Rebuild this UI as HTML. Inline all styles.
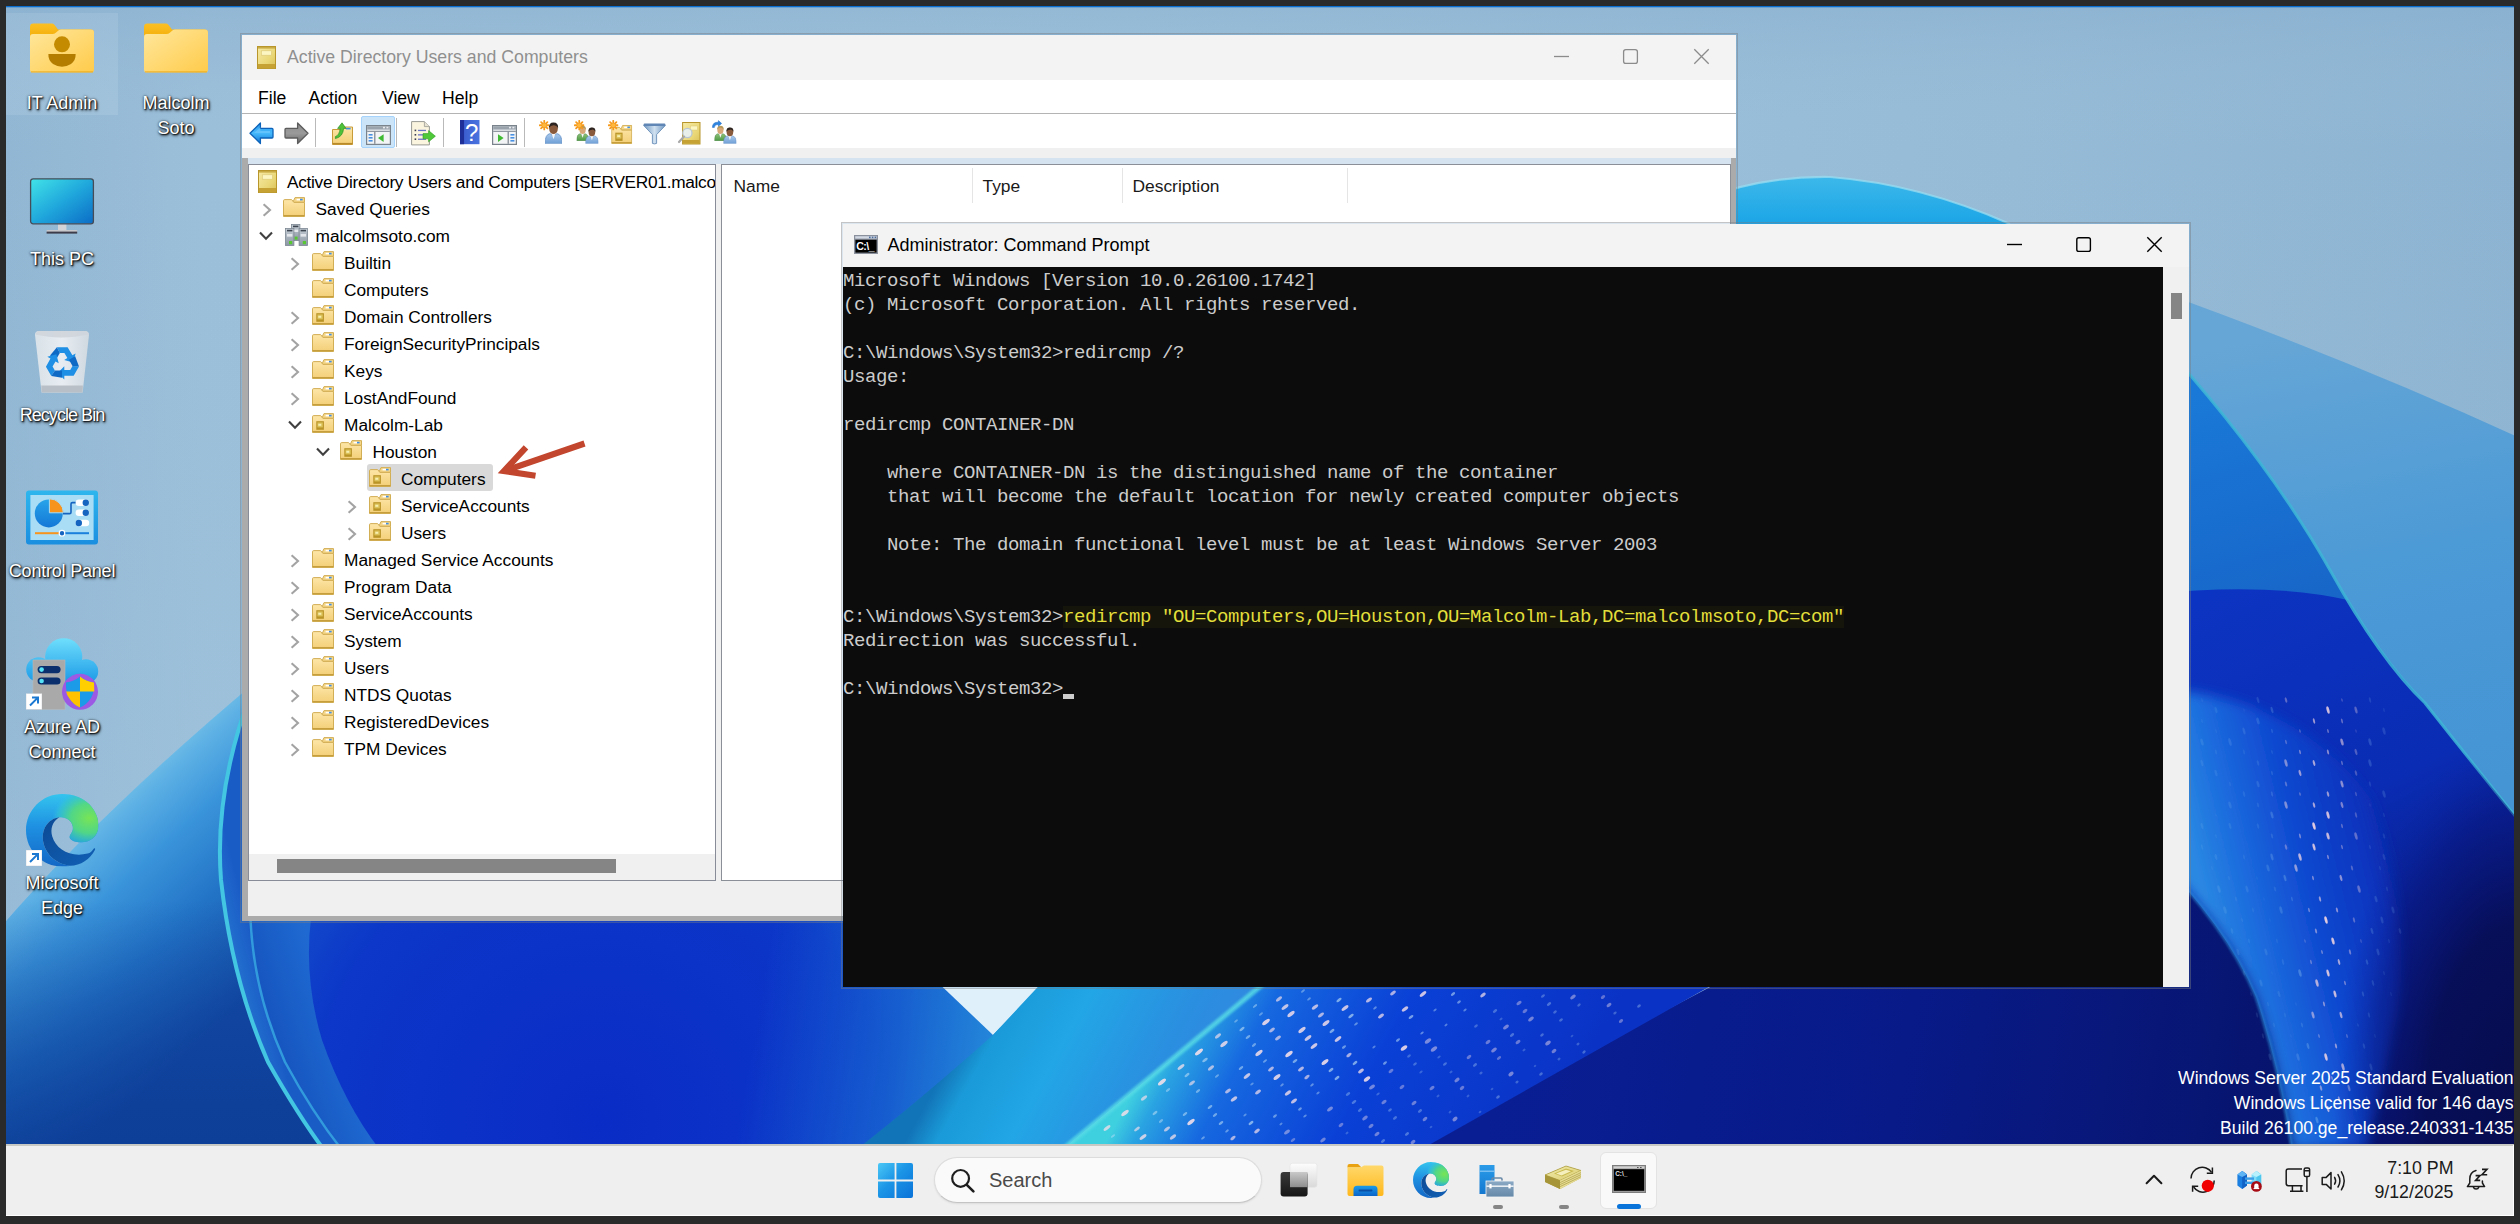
<!DOCTYPE html>
<html lang="en"><head><meta charset="utf-8"><title>Desktop</title>
<style>
*{box-sizing:border-box}
html,body{margin:0;padding:0}
body{width:2520px;height:1224px;overflow:hidden;background:#2a2a2a;position:relative;font-family:"Liberation Sans",sans-serif;font-size:17.5px;color:#000}
#scr{position:absolute;left:0;top:0;width:2520px;height:1224px;overflow:hidden}
.fr{position:absolute;background:#2a2a2a;z-index:50}
.a{position:absolute}
svg{display:block;overflow:visible}
/* desktop icons */
.dl{position:absolute;width:130px;text-align:center;color:#fff;font-size:18px;line-height:25px;text-shadow:1px 1px 1.5px rgba(0,0,0,.95),0 0 2.5px rgba(0,0,0,.75),1px 2px 3px rgba(0,0,0,.55)}
/* windows */
.tx{position:absolute;white-space:pre;line-height:20px}
#con .y{color:#e2de3a;background:#15150b}

</style></head>
<body>
<div id="scr">
<svg width="0" height="0" style="position:absolute">
<defs>
<linearGradient id="gFold" x1="0" y1="0" x2="0" y2="1"><stop offset="0" stop-color="#fde6a8"/><stop offset="1" stop-color="#f3cf77"/></linearGradient>
<linearGradient id="gGold" x1="0" y1="0" x2="1" y2="1"><stop offset="0" stop-color="#f6eaa6"/><stop offset=".6" stop-color="#ead878"/><stop offset="1" stop-color="#d8bf55"/></linearGradient>
<linearGradient id="gSrv" x1="0" y1="0" x2="0" y2="1"><stop offset="0" stop-color="#c4ccd4"/><stop offset="1" stop-color="#8b97a4"/></linearGradient>
<linearGradient id="gBack" x1="0" y1="0" x2="0" y2="1"><stop offset="0" stop-color="#2f9bee"/><stop offset=".5" stop-color="#46b9fb"/><stop offset="1" stop-color="#0f74d6"/></linearGradient>
<linearGradient id="gFwd" x1="0" y1="0" x2="0" y2="1"><stop offset="0" stop-color="#8c8c8c"/><stop offset=".5" stop-color="#9a9a9a"/><stop offset="1" stop-color="#6a6a6a"/></linearGradient>
<linearGradient id="gHelp" x1="0" y1="0" x2="1" y2="0"><stop offset="0" stop-color="#2338a8"/><stop offset=".25" stop-color="#3c5fd0"/><stop offset="1" stop-color="#4a74e0"/></linearGradient>
<linearGradient id="gFun" x1="0" y1="0" x2="1" y2="0"><stop offset="0" stop-color="#6f97c2"/><stop offset=".5" stop-color="#cfe0f0"/><stop offset="1" stop-color="#6f97c2"/></linearGradient>
<linearGradient id="gBody" x1="0" y1="0" x2="0" y2="1"><stop offset="0" stop-color="#a9c9ec"/><stop offset="1" stop-color="#6f9fd6"/></linearGradient>
<linearGradient id="gBodyG" x1="0" y1="0" x2="0" y2="1"><stop offset="0" stop-color="#8fc27a"/><stop offset="1" stop-color="#4f9a45"/></linearGradient>
<!-- plain folder 22x20 -->
<symbol id="iFolder" viewBox="0 0 22 20">
<path d="M.5 3.8Q.5 2.6 1.7 2.6H8.6L11 5.4H21.5V19.5H.5Z" fill="url(#gFold)" stroke="#d2ae55" stroke-width="1"/>
<path d="M10.2 4.6L12 .6H21.5V5.2H11Z" fill="#f6d88a" stroke="#d2ae55" stroke-width="1"/>
<rect x="13.6" y="1.8" width="3.4" height="1.6" fill="#fff"/><rect x="17" y="1.8" width="2.6" height="1.6" fill="#3f8fe8"/>
<path d="M.5 18.6H21.5" stroke="#c79e3c" stroke-width="1.2"/>
</symbol>
<!-- OU folder -->
<symbol id="iOU" viewBox="0 0 22 20">
<use href="#iFolder"/>
<rect x="4.3" y="8.2" width="7.6" height="8.6" fill="#b99326"/>
<rect x="5.4" y="9.4" width="5.4" height="5" fill="#dcc25a"/>
<rect x="6.3" y="10.8" width="3" height="2" fill="#f6efb0"/>
</symbol>
<!-- AD root book 19x23 -->
<symbol id="iAD" viewBox="0 0 19 23">
<rect x=".5" y=".5" width="18" height="22" fill="url(#gGold)" stroke="#b8962c" stroke-width="1"/>
<rect x="1" y="18" width="17" height="4.5" fill="#c5a233"/>
<rect x="1" y="1" width="17" height="1.6" fill="#c9ab45"/>
<rect x="4.4" y="4.8" width="10" height="4.4" fill="#fbf6c2" stroke="#dcc877" stroke-width=".6"/>
</symbol>
<!-- domain servers 23x22 -->
<symbol id="iDom" viewBox="0 0 23 22">
<rect x="6.5" y=".5" width="8.4" height="16" fill="url(#gSrv)" stroke="#7c8792" stroke-width=".8"/>
<rect x="8" y="1.6" width="5.4" height="1.6" fill="#3d4650"/><rect x="8" y="5.6" width="5.4" height="2.4" fill="#e4e8ec"/><rect x="9.6" y="12.6" width="3" height="3" fill="#58c832"/>
<rect x=".5" y="4.5" width="8.4" height="17" fill="url(#gSrv)" stroke="#7c8792" stroke-width=".8"/>
<rect x="2" y="5.8" width="5.4" height="1.6" fill="#3d4650"/><rect x="2" y="10" width="5.4" height="2.6" fill="#e4e8ec"/><rect x="4" y="17" width="3.2" height="3.2" fill="#58c832"/>
<rect x="14.1" y="4.5" width="8.4" height="17" fill="url(#gSrv)" stroke="#7c8792" stroke-width=".8"/>
<rect x="15.6" y="5.8" width="5.4" height="1.6" fill="#3d4650"/><rect x="15.6" y="10" width="5.4" height="2.6" fill="#e4e8ec"/><rect x="17.8" y="17" width="3.2" height="3.2" fill="#58c832"/>
</symbol>
<symbol id="chR" viewBox="0 0 10 14"><path d="M1.6 1.2L8 7L1.6 12.8" fill="none" stroke="#a3a3a3" stroke-width="2.1"/></symbol>
<symbol id="chD" viewBox="0 0 14 10"><path d="M1 1.6L7 7.8L13 1.6" fill="none" stroke="#404040" stroke-width="2.1"/></symbol>
<!-- person head+body (w 14 h 18) -->
<symbol id="iMan" viewBox="0 0 14 18">
<path d="M0 18Q0 10.5 4.2 9.8L7 12L9.8 9.8Q14 10.5 14 18Z" fill="url(#gBody)" stroke="#5f8cc4" stroke-width=".6"/>
<path d="M5.6 10.4L7 14.5L8.4 10.4Z" fill="#f4f6fa"/>
<ellipse cx="7" cy="5.6" rx="3.6" ry="4.6" fill="#8a5a3c"/>
<path d="M3.2 5.2Q3 .6 7 .6Q11.2.6 10.8 5.4Q9.6 2.8 7 3Q4.6 3 3.2 5.2Z" fill="#2c2420"/>
</symbol>
<symbol id="iManG" viewBox="0 0 14 18">
<path d="M0 18Q0 10.5 4.2 9.8L7 12L9.8 9.8Q14 10.5 14 18Z" fill="url(#gBodyG)" stroke="#3f7f3a" stroke-width=".6"/>
<path d="M5.6 10.4L7 14.5L8.4 10.4Z" fill="#f4f6fa"/>
<ellipse cx="7" cy="5.6" rx="3.6" ry="4.6" fill="#d9a878"/>
<path d="M3.2 5.2Q3 .6 7 .6Q11.2.6 10.8 5.4Q9.6 2.8 7 3Q4.6 3 3.2 5.2Z" fill="#b89a5a"/>
</symbol>
<symbol id="iStar" viewBox="0 0 10 10"><g stroke="#f59a1c" stroke-width="1.7" stroke-linecap="round"><path d="M5 .8V9.2M.8 5H9.2M2 2L8 8M8 2L2 8"/></g><circle cx="5" cy="5" r="2" fill="#ffb83c"/></symbol>
<linearGradient id="ed1" x1="0" y1="0" x2="0" y2="1"><stop offset="0" stop-color="#34c4ee"/><stop offset=".45" stop-color="#1e90e2"/><stop offset="1" stop-color="#1468c6"/></linearGradient><radialGradient id="ed2" cx=".84" cy=".5" r=".62"><stop offset="0" stop-color="#78e456"/><stop offset=".5" stop-color="#52d884" stop-opacity=".97"/><stop offset=".85" stop-color="#35c6d0" stop-opacity=".6"/><stop offset="1" stop-color="#2fc0ec" stop-opacity="0"/></radialGradient><linearGradient id="ed3" x1="0" y1="0" x2="1" y2="1"><stop offset="0" stop-color="#0c4a94"/><stop offset="1" stop-color="#1160b6"/></linearGradient>
<symbol id="iEdge" viewBox="0 0 36 36">
<path d="M18 0C30 0 36 8.5 36 15.5C36 21 32 24 27.5 24C23.5 24 21 22.5 21.8 20.6C22.6 19 23.6 18.4 23.2 16C22.6 13 19.6 11.2 16.6 11.6C10.6 12.4 7.4 18 8.6 24C9.8 30 15 35 22 35.6C20.6 35.9 19.2 36 18 36C8 36 0 28 0 18C0 8 8 0 18 0Z" fill="url(#ed1)"/>
<path d="M18 0C30 0 36 8.5 36 15.5C36 21 32 24 27.5 24C23.5 24 21 22.5 21.8 20.6C22.6 19 23.6 18.4 23.2 16C22.6 13 19.6 11.2 16.6 11.6C10.6 12.4 7.4 18 8.6 24C4 14 8 6 18 0Z" fill="url(#ed2)"/>
<path d="M8.6 24C7.4 18 10.6 12.4 16.6 11.6C13 13.6 12 17.6 13 21C15 27.6 22 31.6 30.6 29.6C32 29.2 32.6 28.6 33.4 27.4C34 26.6 34.6 27 34.2 27.8C32 32.4 27 35.6 22 35.6C15 35 9.8 30 8.6 24Z" fill="url(#ed3)"/></symbol>
</defs>
</svg>

<svg class="a" style="left:0;top:0" width="2520" height="1224" viewBox="0 0 2520 1224">
<defs>
<linearGradient id="sky" x1="0" y1="0" x2="1" y2="0"><stop offset="0" stop-color="#90b6d3"/><stop offset=".08" stop-color="#9cbfd9"/><stop offset=".45" stop-color="#9fc3dc"/><stop offset=".8" stop-color="#95bbd7"/><stop offset="1" stop-color="#8cb3d1"/></linearGradient>
<linearGradient id="skyv" x1="0" y1="0" x2="0" y2="1"><stop offset="0" stop-color="#88afcf" stop-opacity=".55"/><stop offset=".12" stop-color="#9cc0da" stop-opacity="0"/><stop offset="1" stop-color="#a8c8e0" stop-opacity=".5"/></linearGradient>
<linearGradient id="lp" gradientUnits="userSpaceOnUse" x1="118" y1="780" x2="285" y2="965"><stop offset="0" stop-color="#a6d0ea"/><stop offset=".035" stop-color="#74c0e8"/><stop offset=".12" stop-color="#5cb0e4"/><stop offset=".32" stop-color="#3a94da"/><stop offset=".6" stop-color="#2273c6"/><stop offset="1" stop-color="#134aa4"/></linearGradient>
<linearGradient id="lpd" gradientUnits="userSpaceOnUse" x1="0" y1="900" x2="0" y2="1145"><stop offset="0" stop-color="#0b3a94" stop-opacity="0"/><stop offset="1" stop-color="#0b3a94" stop-opacity=".75"/></linearGradient>
<radialGradient id="deep" gradientUnits="userSpaceOnUse" cx="600" cy="1120" r="480"><stop offset="0" stop-color="#0a2cc6"/><stop offset=".6" stop-color="#0c37c8"/><stop offset=".82" stop-color="#1450cb"/><stop offset="1" stop-color="#2183d7"/></radialGradient>
<linearGradient id="deepr" gradientUnits="userSpaceOnUse" x1="760" y1="1000" x2="990" y2="1040"><stop offset="0" stop-color="#1c74d4" stop-opacity="0"/><stop offset=".6" stop-color="#1c74d4" stop-opacity=".6"/><stop offset="1" stop-color="#2488da" stop-opacity=".95"/></linearGradient>
<linearGradient id="band2" gradientUnits="userSpaceOnUse" x1="250" y1="1010" x2="325" y2="985"><stop offset="0" stop-color="#1450bc"/><stop offset="1" stop-color="#1f6ad2"/></linearGradient>
<linearGradient id="band" gradientUnits="userSpaceOnUse" x1="225" y1="1000" x2="265" y2="990"><stop offset="0" stop-color="#2a80d6"/><stop offset="1" stop-color="#1a5cc6"/></linearGradient>
<linearGradient id="bp" gradientUnits="userSpaceOnUse" x1="950" y1="1060" x2="1150" y2="1170"><stop offset="0" stop-color="#1274b8"/><stop offset=".12" stop-color="#1a9ad8"/><stop offset=".4" stop-color="#22a6e6"/><stop offset=".8" stop-color="#2a8fe0"/><stop offset="1" stop-color="#2f8ae0"/></linearGradient>
<linearGradient id="rib" gradientUnits="userSpaceOnUse" x1="1150" y1="1060" x2="1500" y2="1250"><stop offset="0" stop-color="#3fd0e0"/><stop offset=".06" stop-color="#2aa4e2"/><stop offset=".2" stop-color="#1668e0"/><stop offset=".5" stop-color="#0a40d6"/><stop offset="1" stop-color="#0a32c4"/></linearGradient>
<linearGradient id="navy" gradientUnits="userSpaceOnUse" x1="1500" y1="1000" x2="2300" y2="1145"><stop offset="0" stop-color="#0a1e94"/><stop offset=".5" stop-color="#081a88"/><stop offset="1" stop-color="#07146c"/></linearGradient>
<linearGradient id="p1" gradientUnits="userSpaceOnUse" x1="2300" y1="330" x2="2400" y2="800"><stop offset="0" stop-color="#66a6d6"/><stop offset=".5" stop-color="#4c9ad6"/><stop offset="1" stop-color="#4594d4"/></linearGradient>
<linearGradient id="p2" gradientUnits="userSpaceOnUse" x1="2190" y1="380" x2="2260" y2="620"><stop offset="0" stop-color="#1a7ad8"/><stop offset="1" stop-color="#1766c8"/></linearGradient>
<linearGradient id="p3" gradientUnits="userSpaceOnUse" x1="2190" y1="600" x2="2450" y2="1100"><stop offset="0" stop-color="#0c34c2"/><stop offset=".45" stop-color="#0a2cb4"/><stop offset="1" stop-color="#070f5c"/></linearGradient>
<linearGradient id="rr" gradientUnits="userSpaceOnUse" x1="2205" y1="900" x2="2410" y2="850"><stop offset="0" stop-color="#2a88e2"/><stop offset=".2" stop-color="#1c6cde"/><stop offset=".5" stop-color="#0f48d0"/><stop offset=".8" stop-color="#0b34be"/><stop offset="1" stop-color="#0a2cb4" stop-opacity="0"/></linearGradient>
<radialGradient id="dk" gradientUnits="userSpaceOnUse" cx="2520" cy="1110" r="300" gradientTransform="translate(2520 1110) scale(.62 1.25) translate(-2520 -1110)"><stop offset="0" stop-color="#070c4e"/><stop offset=".5" stop-color="#070e56" stop-opacity=".92"/><stop offset=".8" stop-color="#08147a" stop-opacity=".5"/><stop offset="1" stop-color="#0a22a0" stop-opacity="0"/></radialGradient>
<linearGradient id="arc" gradientUnits="userSpaceOnUse" x1="1800" y1="178" x2="1800" y2="225"><stop offset="0" stop-color="#3cb8ea"/><stop offset="1" stop-color="#1aa4e6"/></linearGradient>
<filter id="b6" x="-50%" y="-50%" width="200%" height="200%"><feGaussianBlur stdDeviation="6"/></filter>
<filter id="b2" x="-50%" y="-50%" width="200%" height="200%"><feGaussianBlur stdDeviation="1.2"/></filter>
<filter id="b14" x="-50%" y="-50%" width="200%" height="200%"><feGaussianBlur stdDeviation="14"/></filter>
</defs>
<rect x="0" y="0" width="2520" height="1224" fill="url(#sky)"/>
<rect x="0" y="0" width="2520" height="1224" fill="url(#skyv)"/>
<path d="M1700 200 Q1760 176 1830 177 Q1920 184 2010 224 L2010 260 L1700 260Z" fill="url(#arc)"/>
<path d="M1700 200 Q1760 176 1830 177 Q1920 184 2010 224" fill="none" stroke="#9adcf0" stroke-width="2.2" opacity=".75"/>
<rect x="0" y="6" width="2520" height="1.300" fill="#0a6ed0"/>
<path d="M2150 288 Q2350 360 2520 438 L2520 900 L2150 900Z" fill="url(#p1)"/>
<path d="M2150 330 Q2265 455 2330 570 Q2380 660 2440 740 L2150 740Z" fill="url(#p2)"/>
<path d="M2150 594 Q2270 582 2348 600 Q2380 655 2425 703 Q2470 760 2520 822 L2520 1150 L2150 1150Z" fill="url(#p3)"/>
<path d="M2150 330 Q2265 455 2330 570 Q2380 660 2425 703 Q2470 760 2520 822" fill="none" stroke="#3fb6d6" stroke-width="3" opacity=".85"/>
<path d="M2150 690 Q2290 690 2372 800 Q2412 900 2398 1010 Q2384 1080 2368 1150 L2292 1150 Q2280 1070 2256 997 Q2226 925 2150 850Z" fill="url(#rr)" filter="url(#b6)"/>
<clipPath id="cp3"><path d="M2150 594 Q2270 582 2348 600 Q2380 655 2425 703 Q2470 760 2520 822 L2520 1150 L2150 1150Z"/></clipPath><rect x="2150" y="600" width="370" height="550" fill="url(#dk)" clip-path="url(#cp3)"/>
<path d="M2150 850 Q2226 925 2256 997 Q2280 1070 2292 1150 L1400 1150 L1712 986 L2150 986Z" fill="url(#navy)"/>
<path d="M2150 850 Q2226 925 2256 997 Q2280 1070 2292 1150" fill="none" stroke="#2a90d8" stroke-width="3" opacity=".6" filter="url(#b2)"/>
<path d="M0 928 Q110 800 300 645 L420 1150 L0 1150Z" fill="url(#lp)"/>
<path d="M0 928 Q110 800 300 645 L420 1150 L0 1150Z" fill="url(#lpd)"/>
<path d="M252 690 Q214 790 221 880 Q232 980 268 1062 Q298 1115 324 1150 L700 1150 L700 680Z" fill="url(#band)"/>
<path d="M250 900 Q250 985 285 1062 Q312 1112 342 1150 L700 1150 L700 900Z" fill="url(#band2)"/>
<path d="M318 880 Q298 960 322 1040 Q345 1105 380 1150 L1000 1150 L1000 880Z" fill="url(#deep)"/>
<path d="M700 880 L1000 880 L1000 1150 L700 1150Z" fill="url(#deepr)"/>
<path d="M252 690 Q214 790 221 880 Q232 980 268 1062 Q298 1115 324 1150" fill="none" stroke="#43c6e2" stroke-width="4"/>
<path d="M250 900 Q250 985 285 1062 Q312 1112 342 1150" fill="none" stroke="#36a6e0" stroke-width="2.500" opacity=".85"/>
<path d="M930 975 L1050 975 L993 1035Z" fill="#dff0fb"/>
<path d="M1049 975 L1274 975 L1062 1150 L856 1150 Q920 1100 993 1035Z" fill="url(#bp)"/>
<path d="M1274 975 L1730 975 L1420 1150 L1062 1150Z" fill="url(#rib)"/>
<path d="M1274 975 L1062 1150" fill="none" stroke="#57dbe6" stroke-width="5" opacity=".8" filter="url(#b2)"/>
<g><ellipse cx="1279" cy="999" rx="3.6" ry="1.5" fill="#f4dfea" opacity="0.67" transform="rotate(-38 1279 999)"/><ellipse cx="1303" cy="991" rx="2.3" ry="1.1" fill="#bfe0f6" opacity="0.43" transform="rotate(-38 1303 991)"/><ellipse cx="1309" cy="999" rx="2.2" ry="1.1" fill="#bfe0f6" opacity="0.42" transform="rotate(-38 1309 999)"/><ellipse cx="1339" cy="1000" rx="3.1" ry="1.4" fill="#bfe0f6" opacity="0.62" transform="rotate(-38 1339 1000)"/><ellipse cx="1369" cy="1000" rx="3.5" ry="1.6" fill="#f4dfea" opacity="0.72" transform="rotate(-38 1369 1000)"/><ellipse cx="1393" cy="993" rx="3.3" ry="1.5" fill="#f4dfea" opacity="0.69" transform="rotate(-38 1393 993)"/><ellipse cx="1423" cy="994" rx="3.9" ry="1.7" fill="#f4dfea" opacity="0.83" transform="rotate(-38 1423 994)"/><ellipse cx="1453" cy="994" rx="2.5" ry="1.3" fill="#bfe0f6" opacity="0.56" transform="rotate(-38 1453 994)"/><ellipse cx="1459" cy="1002" rx="2.2" ry="1.2" fill="#bfe0f6" opacity="0.49" transform="rotate(-38 1459 1002)"/><ellipse cx="1483" cy="995" rx="3.1" ry="1.6" fill="#f4dfea" opacity="0.72" transform="rotate(-38 1483 995)"/><ellipse cx="1519" cy="1003" rx="3.0" ry="1.6" fill="#f4dfea" opacity="0.41" transform="rotate(-38 1519 1003)"/><ellipse cx="1543" cy="996" rx="2.3" ry="1.3" fill="#bfe0f6" opacity="0.31" transform="rotate(-38 1543 996)"/><ellipse cx="1549" cy="1004" rx="2.5" ry="1.4" fill="#bfe0f6" opacity="0.35" transform="rotate(-38 1549 1004)"/><ellipse cx="1573" cy="997" rx="3.1" ry="1.7" fill="#f4dfea" opacity="0.44" transform="rotate(-38 1573 997)"/><ellipse cx="1579" cy="1005" rx="2.0" ry="1.2" fill="#bfe0f6" opacity="0.29" transform="rotate(-38 1579 1005)"/><ellipse cx="1603" cy="997" rx="2.5" ry="1.5" fill="#f4dfea" opacity="0.37" transform="rotate(-38 1603 997)"/><ellipse cx="1609" cy="1005" rx="2.8" ry="1.6" fill="#f4dfea" opacity="0.43" transform="rotate(-38 1609 1005)"/><ellipse cx="1639" cy="1006" rx="2.1" ry="1.4" fill="#bfe0f6" opacity="0.34" transform="rotate(-38 1639 1006)"/><ellipse cx="1255" cy="1006" rx="2.6" ry="1.1" fill="#bfe0f6" opacity="0.48" transform="rotate(-38 1255 1006)"/><ellipse cx="1261" cy="1014" rx="2.3" ry="1.1" fill="#bfe0f6" opacity="0.42" transform="rotate(-38 1261 1014)"/><ellipse cx="1285" cy="1007" rx="4.1" ry="1.7" fill="#f4dfea" opacity="0.78" transform="rotate(-38 1285 1007)"/><ellipse cx="1291" cy="1014" rx="4.3" ry="1.8" fill="#f4dfea" opacity="0.84" transform="rotate(-38 1291 1014)"/><ellipse cx="1315" cy="1007" rx="3.8" ry="1.6" fill="#f4dfea" opacity="0.75" transform="rotate(-38 1315 1007)"/><ellipse cx="1321" cy="1015" rx="3.5" ry="1.5" fill="#f4dfea" opacity="0.69" transform="rotate(-38 1321 1015)"/><ellipse cx="1345" cy="1008" rx="4.1" ry="1.7" fill="#f4dfea" opacity="0.82" transform="rotate(-38 1345 1008)"/><ellipse cx="1351" cy="1016" rx="3.1" ry="1.4" fill="#bfe0f6" opacity="0.64" transform="rotate(-38 1351 1016)"/><ellipse cx="1375" cy="1008" rx="2.1" ry="1.1" fill="#bfe0f6" opacity="0.44" transform="rotate(-38 1375 1008)"/><ellipse cx="1381" cy="1016" rx="3.4" ry="1.6" fill="#f4dfea" opacity="0.73" transform="rotate(-38 1381 1016)"/><ellipse cx="1405" cy="1009" rx="3.8" ry="1.7" fill="#f4dfea" opacity="0.81" transform="rotate(-38 1405 1009)"/><ellipse cx="1411" cy="1017" rx="2.7" ry="1.3" fill="#bfe0f6" opacity="0.60" transform="rotate(-38 1411 1017)"/><ellipse cx="1435" cy="1010" rx="1.9" ry="1.0" fill="#bfe0f6" opacity="0.42" transform="rotate(-38 1435 1010)"/><ellipse cx="1465" cy="1010" rx="1.9" ry="1.1" fill="#bfe0f6" opacity="0.43" transform="rotate(-38 1465 1010)"/><ellipse cx="1495" cy="1011" rx="2.5" ry="1.4" fill="#bfe0f6" opacity="0.33" transform="rotate(-38 1495 1011)"/><ellipse cx="1501" cy="1019" rx="1.8" ry="1.1" fill="#bfe0f6" opacity="0.25" transform="rotate(-38 1501 1019)"/><ellipse cx="1525" cy="1011" rx="2.7" ry="1.5" fill="#f4dfea" opacity="0.38" transform="rotate(-38 1525 1011)"/><ellipse cx="1531" cy="1019" rx="3.2" ry="1.7" fill="#f4dfea" opacity="0.45" transform="rotate(-38 1531 1019)"/><ellipse cx="1555" cy="1012" rx="2.1" ry="1.3" fill="#bfe0f6" opacity="0.30" transform="rotate(-38 1555 1012)"/><ellipse cx="1561" cy="1020" rx="2.2" ry="1.3" fill="#bfe0f6" opacity="0.32" transform="rotate(-38 1561 1020)"/><ellipse cx="1615" cy="1013" rx="1.9" ry="1.2" fill="#bfe0f6" opacity="0.29" transform="rotate(-38 1615 1013)"/><ellipse cx="1621" cy="1021" rx="2.4" ry="1.5" fill="#f4dfea" opacity="0.39" transform="rotate(-38 1621 1021)"/><ellipse cx="1236" cy="1021" rx="2.2" ry="1.0" fill="#bfe0f6" opacity="0.41" transform="rotate(-38 1236 1021)"/><ellipse cx="1242" cy="1029" rx="3.1" ry="1.3" fill="#bfe0f6" opacity="0.59" transform="rotate(-38 1242 1029)"/><ellipse cx="1266" cy="1022" rx="4.6" ry="1.8" fill="#f4dfea" opacity="0.88" transform="rotate(-38 1266 1022)"/><ellipse cx="1272" cy="1030" rx="3.4" ry="1.5" fill="#f4dfea" opacity="0.66" transform="rotate(-38 1272 1030)"/><ellipse cx="1302" cy="1030" rx="4.3" ry="1.8" fill="#f4dfea" opacity="0.85" transform="rotate(-38 1302 1030)"/><ellipse cx="1326" cy="1023" rx="4.1" ry="1.8" fill="#f4dfea" opacity="0.84" transform="rotate(-38 1326 1023)"/><ellipse cx="1332" cy="1031" rx="2.9" ry="1.4" fill="#bfe0f6" opacity="0.60" transform="rotate(-38 1332 1031)"/><ellipse cx="1356" cy="1024" rx="2.2" ry="1.1" fill="#bfe0f6" opacity="0.46" transform="rotate(-38 1356 1024)"/><ellipse cx="1422" cy="1033" rx="2.0" ry="1.1" fill="#bfe0f6" opacity="0.46" transform="rotate(-38 1422 1033)"/><ellipse cx="1446" cy="1025" rx="1.8" ry="1.0" fill="#bfe0f6" opacity="0.42" transform="rotate(-38 1446 1025)"/><ellipse cx="1476" cy="1026" rx="2.2" ry="1.2" fill="#bfe0f6" opacity="0.29" transform="rotate(-38 1476 1026)"/><ellipse cx="1506" cy="1027" rx="3.3" ry="1.7" fill="#f4dfea" opacity="0.46" transform="rotate(-38 1506 1027)"/><ellipse cx="1512" cy="1035" rx="2.5" ry="1.4" fill="#bfe0f6" opacity="0.35" transform="rotate(-38 1512 1035)"/><ellipse cx="1542" cy="1035" rx="2.1" ry="1.3" fill="#bfe0f6" opacity="0.32" transform="rotate(-38 1542 1035)"/><ellipse cx="1572" cy="1036" rx="1.5" ry="1.0" fill="#bfe0f6" opacity="0.23" transform="rotate(-38 1572 1036)"/><ellipse cx="1218" cy="1036" rx="3.6" ry="1.5" fill="#f4dfea" opacity="0.67" transform="rotate(-38 1218 1036)"/><ellipse cx="1224" cy="1044" rx="4.4" ry="1.8" fill="#f4dfea" opacity="0.83" transform="rotate(-38 1224 1044)"/><ellipse cx="1248" cy="1037" rx="2.8" ry="1.2" fill="#bfe0f6" opacity="0.53" transform="rotate(-38 1248 1037)"/><ellipse cx="1254" cy="1045" rx="2.5" ry="1.2" fill="#bfe0f6" opacity="0.49" transform="rotate(-38 1254 1045)"/><ellipse cx="1278" cy="1038" rx="3.4" ry="1.5" fill="#f4dfea" opacity="0.67" transform="rotate(-38 1278 1038)"/><ellipse cx="1308" cy="1038" rx="4.0" ry="1.7" fill="#f4dfea" opacity="0.81" transform="rotate(-38 1308 1038)"/><ellipse cx="1314" cy="1046" rx="4.0" ry="1.7" fill="#f4dfea" opacity="0.83" transform="rotate(-38 1314 1046)"/><ellipse cx="1338" cy="1039" rx="3.9" ry="1.7" fill="#f4dfea" opacity="0.81" transform="rotate(-38 1338 1039)"/><ellipse cx="1344" cy="1047" rx="2.4" ry="1.2" fill="#bfe0f6" opacity="0.52" transform="rotate(-38 1344 1047)"/><ellipse cx="1374" cy="1047" rx="1.9" ry="1.0" fill="#bfe0f6" opacity="0.42" transform="rotate(-38 1374 1047)"/><ellipse cx="1398" cy="1040" rx="2.4" ry="1.2" fill="#bfe0f6" opacity="0.53" transform="rotate(-38 1398 1040)"/><ellipse cx="1404" cy="1048" rx="3.8" ry="1.8" fill="#f4dfea" opacity="0.88" transform="rotate(-38 1404 1048)"/><ellipse cx="1428" cy="1041" rx="3.7" ry="1.8" fill="#f4dfea" opacity="0.48" transform="rotate(-38 1428 1041)"/><ellipse cx="1434" cy="1049" rx="3.7" ry="1.8" fill="#f4dfea" opacity="0.49" transform="rotate(-38 1434 1049)"/><ellipse cx="1488" cy="1042" rx="2.8" ry="1.6" fill="#f4dfea" opacity="0.40" transform="rotate(-38 1488 1042)"/><ellipse cx="1494" cy="1050" rx="3.2" ry="1.7" fill="#f4dfea" opacity="0.46" transform="rotate(-38 1494 1050)"/><ellipse cx="1518" cy="1042" rx="2.8" ry="1.6" fill="#f4dfea" opacity="0.40" transform="rotate(-38 1518 1042)"/><ellipse cx="1524" cy="1050" rx="1.7" ry="1.1" fill="#bfe0f6" opacity="0.25" transform="rotate(-38 1524 1050)"/><ellipse cx="1548" cy="1043" rx="3.1" ry="1.8" fill="#f4dfea" opacity="0.48" transform="rotate(-38 1548 1043)"/><ellipse cx="1554" cy="1051" rx="2.7" ry="1.7" fill="#f4dfea" opacity="0.43" transform="rotate(-38 1554 1051)"/><ellipse cx="1578" cy="1044" rx="1.7" ry="1.2" fill="#bfe0f6" opacity="0.27" transform="rotate(-38 1578 1044)"/><ellipse cx="1584" cy="1052" rx="1.9" ry="1.3" fill="#bfe0f6" opacity="0.32" transform="rotate(-38 1584 1052)"/><ellipse cx="1199" cy="1052" rx="4.8" ry="1.8" fill="#f4dfea" opacity="0.89" transform="rotate(-38 1199 1052)"/><ellipse cx="1205" cy="1060" rx="3.2" ry="1.4" fill="#bfe0f6" opacity="0.60" transform="rotate(-38 1205 1060)"/><ellipse cx="1259" cy="1053" rx="4.3" ry="1.8" fill="#f4dfea" opacity="0.85" transform="rotate(-38 1259 1053)"/><ellipse cx="1265" cy="1061" rx="2.4" ry="1.1" fill="#bfe0f6" opacity="0.48" transform="rotate(-38 1265 1061)"/><ellipse cx="1289" cy="1054" rx="4.4" ry="1.9" fill="#f4dfea" opacity="0.89" transform="rotate(-38 1289 1054)"/><ellipse cx="1295" cy="1061" rx="2.8" ry="1.3" fill="#bfe0f6" opacity="0.58" transform="rotate(-38 1295 1061)"/><ellipse cx="1325" cy="1062" rx="4.1" ry="1.8" fill="#f4dfea" opacity="0.89" transform="rotate(-38 1325 1062)"/><ellipse cx="1349" cy="1055" rx="3.1" ry="1.5" fill="#f4dfea" opacity="0.67" transform="rotate(-38 1349 1055)"/><ellipse cx="1355" cy="1063" rx="2.8" ry="1.4" fill="#bfe0f6" opacity="0.62" transform="rotate(-38 1355 1063)"/><ellipse cx="1385" cy="1063" rx="2.3" ry="1.2" fill="#bfe0f6" opacity="0.53" transform="rotate(-38 1385 1063)"/><ellipse cx="1409" cy="1056" rx="2.2" ry="1.2" fill="#bfe0f6" opacity="0.29" transform="rotate(-38 1409 1056)"/><ellipse cx="1415" cy="1064" rx="2.2" ry="1.2" fill="#bfe0f6" opacity="0.30" transform="rotate(-38 1415 1064)"/><ellipse cx="1439" cy="1057" rx="1.9" ry="1.1" fill="#bfe0f6" opacity="0.26" transform="rotate(-38 1439 1057)"/><ellipse cx="1445" cy="1064" rx="2.3" ry="1.3" fill="#bfe0f6" opacity="0.32" transform="rotate(-38 1445 1064)"/><ellipse cx="1469" cy="1057" rx="2.7" ry="1.5" fill="#f4dfea" opacity="0.39" transform="rotate(-38 1469 1057)"/><ellipse cx="1475" cy="1065" rx="2.3" ry="1.4" fill="#bfe0f6" opacity="0.34" transform="rotate(-38 1475 1065)"/><ellipse cx="1499" cy="1058" rx="2.5" ry="1.4" fill="#f4dfea" opacity="0.36" transform="rotate(-38 1499 1058)"/><ellipse cx="1535" cy="1066" rx="1.4" ry="1.0" fill="#bfe0f6" opacity="0.23" transform="rotate(-38 1535 1066)"/><ellipse cx="1559" cy="1059" rx="1.7" ry="1.2" fill="#bfe0f6" opacity="0.27" transform="rotate(-38 1559 1059)"/><ellipse cx="1181" cy="1067" rx="4.1" ry="1.6" fill="#f4dfea" opacity="0.76" transform="rotate(-38 1181 1067)"/><ellipse cx="1187" cy="1075" rx="3.0" ry="1.3" fill="#bfe0f6" opacity="0.57" transform="rotate(-38 1187 1075)"/><ellipse cx="1211" cy="1068" rx="3.6" ry="1.5" fill="#f4dfea" opacity="0.68" transform="rotate(-38 1211 1068)"/><ellipse cx="1217" cy="1076" rx="2.4" ry="1.1" fill="#bfe0f6" opacity="0.46" transform="rotate(-38 1217 1076)"/><ellipse cx="1241" cy="1068" rx="2.7" ry="1.2" fill="#bfe0f6" opacity="0.53" transform="rotate(-38 1241 1068)"/><ellipse cx="1247" cy="1076" rx="3.9" ry="1.7" fill="#f4dfea" opacity="0.79" transform="rotate(-38 1247 1076)"/><ellipse cx="1271" cy="1069" rx="3.4" ry="1.5" fill="#f4dfea" opacity="0.68" transform="rotate(-38 1271 1069)"/><ellipse cx="1277" cy="1077" rx="4.1" ry="1.8" fill="#f4dfea" opacity="0.86" transform="rotate(-38 1277 1077)"/><ellipse cx="1301" cy="1069" rx="3.4" ry="1.5" fill="#f4dfea" opacity="0.71" transform="rotate(-38 1301 1069)"/><ellipse cx="1307" cy="1077" rx="3.1" ry="1.5" fill="#f4dfea" opacity="0.66" transform="rotate(-38 1307 1077)"/><ellipse cx="1331" cy="1070" rx="2.9" ry="1.4" fill="#bfe0f6" opacity="0.63" transform="rotate(-38 1331 1070)"/><ellipse cx="1337" cy="1078" rx="2.9" ry="1.4" fill="#bfe0f6" opacity="0.64" transform="rotate(-38 1337 1078)"/><ellipse cx="1361" cy="1071" rx="3.3" ry="1.6" fill="#f4dfea" opacity="0.75" transform="rotate(-38 1361 1071)"/><ellipse cx="1367" cy="1079" rx="3.7" ry="1.8" fill="#f4dfea" opacity="0.87" transform="rotate(-38 1367 1079)"/><ellipse cx="1391" cy="1071" rx="2.9" ry="1.5" fill="#f4dfea" opacity="0.38" transform="rotate(-38 1391 1071)"/><ellipse cx="1421" cy="1072" rx="1.9" ry="1.1" fill="#bfe0f6" opacity="0.26" transform="rotate(-38 1421 1072)"/><ellipse cx="1451" cy="1072" rx="1.7" ry="1.1" fill="#bfe0f6" opacity="0.25" transform="rotate(-38 1451 1072)"/><ellipse cx="1457" cy="1080" rx="3.0" ry="1.7" fill="#f4dfea" opacity="0.44" transform="rotate(-38 1457 1080)"/><ellipse cx="1481" cy="1073" rx="1.8" ry="1.2" fill="#bfe0f6" opacity="0.27" transform="rotate(-38 1481 1073)"/><ellipse cx="1511" cy="1074" rx="3.0" ry="1.8" fill="#f4dfea" opacity="0.47" transform="rotate(-38 1511 1074)"/><ellipse cx="1517" cy="1082" rx="1.8" ry="1.2" fill="#bfe0f6" opacity="0.29" transform="rotate(-38 1517 1082)"/><ellipse cx="1541" cy="1074" rx="2.0" ry="1.4" fill="#bfe0f6" opacity="0.33" transform="rotate(-38 1541 1074)"/><ellipse cx="1162" cy="1082" rx="4.8" ry="1.9" fill="#f4dfea" opacity="0.89" transform="rotate(-38 1162 1082)"/><ellipse cx="1168" cy="1090" rx="2.6" ry="1.2" fill="#bfe0f6" opacity="0.48" transform="rotate(-38 1168 1090)"/><ellipse cx="1192" cy="1083" rx="3.5" ry="1.5" fill="#f4dfea" opacity="0.66" transform="rotate(-38 1192 1083)"/><ellipse cx="1198" cy="1091" rx="2.6" ry="1.2" fill="#bfe0f6" opacity="0.50" transform="rotate(-38 1198 1091)"/><ellipse cx="1228" cy="1091" rx="3.4" ry="1.5" fill="#f4dfea" opacity="0.68" transform="rotate(-38 1228 1091)"/><ellipse cx="1252" cy="1084" rx="2.0" ry="1.0" fill="#bfe0f6" opacity="0.41" transform="rotate(-38 1252 1084)"/><ellipse cx="1258" cy="1092" rx="3.4" ry="1.6" fill="#f4dfea" opacity="0.71" transform="rotate(-38 1258 1092)"/><ellipse cx="1282" cy="1085" rx="2.1" ry="1.1" fill="#bfe0f6" opacity="0.44" transform="rotate(-38 1282 1085)"/><ellipse cx="1288" cy="1093" rx="3.7" ry="1.7" fill="#f4dfea" opacity="0.80" transform="rotate(-38 1288 1093)"/><ellipse cx="1312" cy="1085" rx="2.1" ry="1.1" fill="#bfe0f6" opacity="0.46" transform="rotate(-38 1312 1085)"/><ellipse cx="1318" cy="1093" rx="1.9" ry="1.1" fill="#bfe0f6" opacity="0.42" transform="rotate(-38 1318 1093)"/><ellipse cx="1348" cy="1094" rx="2.6" ry="1.4" fill="#bfe0f6" opacity="0.34" transform="rotate(-38 1348 1094)"/><ellipse cx="1372" cy="1087" rx="3.4" ry="1.7" fill="#f4dfea" opacity="0.45" transform="rotate(-38 1372 1087)"/><ellipse cx="1378" cy="1094" rx="2.0" ry="1.1" fill="#bfe0f6" opacity="0.27" transform="rotate(-38 1378 1094)"/><ellipse cx="1402" cy="1087" rx="2.8" ry="1.5" fill="#f4dfea" opacity="0.38" transform="rotate(-38 1402 1087)"/><ellipse cx="1432" cy="1088" rx="2.9" ry="1.6" fill="#f4dfea" opacity="0.41" transform="rotate(-38 1432 1088)"/><ellipse cx="1438" cy="1096" rx="1.7" ry="1.1" fill="#bfe0f6" opacity="0.24" transform="rotate(-38 1438 1096)"/><ellipse cx="1462" cy="1088" rx="2.6" ry="1.6" fill="#f4dfea" opacity="0.40" transform="rotate(-38 1462 1088)"/><ellipse cx="1468" cy="1096" rx="1.6" ry="1.1" fill="#bfe0f6" opacity="0.25" transform="rotate(-38 1468 1096)"/><ellipse cx="1492" cy="1089" rx="1.5" ry="1.1" fill="#bfe0f6" opacity="0.24" transform="rotate(-38 1492 1089)"/><ellipse cx="1498" cy="1097" rx="2.1" ry="1.4" fill="#bfe0f6" opacity="0.35" transform="rotate(-38 1498 1097)"/><ellipse cx="1144" cy="1098" rx="3.7" ry="1.5" fill="#f4dfea" opacity="0.68" transform="rotate(-38 1144 1098)"/><ellipse cx="1210" cy="1107" rx="2.8" ry="1.3" fill="#bfe0f6" opacity="0.56" transform="rotate(-38 1210 1107)"/><ellipse cx="1234" cy="1099" rx="3.8" ry="1.7" fill="#f4dfea" opacity="0.78" transform="rotate(-38 1234 1099)"/><ellipse cx="1294" cy="1101" rx="3.5" ry="1.6" fill="#f4dfea" opacity="0.77" transform="rotate(-38 1294 1101)"/><ellipse cx="1300" cy="1109" rx="2.2" ry="1.2" fill="#bfe0f6" opacity="0.50" transform="rotate(-38 1300 1109)"/><ellipse cx="1330" cy="1109" rx="3.4" ry="1.7" fill="#f4dfea" opacity="0.45" transform="rotate(-38 1330 1109)"/><ellipse cx="1354" cy="1102" rx="2.7" ry="1.4" fill="#bfe0f6" opacity="0.36" transform="rotate(-38 1354 1102)"/><ellipse cx="1360" cy="1110" rx="2.4" ry="1.4" fill="#bfe0f6" opacity="0.33" transform="rotate(-38 1360 1110)"/><ellipse cx="1384" cy="1102" rx="3.0" ry="1.6" fill="#f4dfea" opacity="0.41" transform="rotate(-38 1384 1102)"/><ellipse cx="1390" cy="1110" rx="2.2" ry="1.3" fill="#bfe0f6" opacity="0.32" transform="rotate(-38 1390 1110)"/><ellipse cx="1414" cy="1103" rx="2.9" ry="1.6" fill="#f4dfea" opacity="0.42" transform="rotate(-38 1414 1103)"/><ellipse cx="1420" cy="1111" rx="2.3" ry="1.4" fill="#bfe0f6" opacity="0.34" transform="rotate(-38 1420 1111)"/><ellipse cx="1450" cy="1112" rx="1.6" ry="1.1" fill="#bfe0f6" opacity="0.24" transform="rotate(-38 1450 1112)"/><ellipse cx="1480" cy="1112" rx="1.5" ry="1.1" fill="#bfe0f6" opacity="0.25" transform="rotate(-38 1480 1112)"/><ellipse cx="1125" cy="1113" rx="4.5" ry="1.8" fill="#f4dfea" opacity="0.84" transform="rotate(-38 1125 1113)"/><ellipse cx="1155" cy="1113" rx="2.9" ry="1.3" fill="#bfe0f6" opacity="0.55" transform="rotate(-38 1155 1113)"/><ellipse cx="1161" cy="1121" rx="2.5" ry="1.2" fill="#bfe0f6" opacity="0.48" transform="rotate(-38 1161 1121)"/><ellipse cx="1185" cy="1114" rx="2.7" ry="1.2" fill="#bfe0f6" opacity="0.54" transform="rotate(-38 1185 1114)"/><ellipse cx="1191" cy="1122" rx="4.4" ry="1.8" fill="#f4dfea" opacity="0.89" transform="rotate(-38 1191 1122)"/><ellipse cx="1215" cy="1115" rx="2.6" ry="1.2" fill="#bfe0f6" opacity="0.53" transform="rotate(-38 1215 1115)"/><ellipse cx="1221" cy="1123" rx="2.7" ry="1.3" fill="#bfe0f6" opacity="0.56" transform="rotate(-38 1221 1123)"/><ellipse cx="1245" cy="1115" rx="1.9" ry="1.0" fill="#bfe0f6" opacity="0.41" transform="rotate(-38 1245 1115)"/><ellipse cx="1251" cy="1123" rx="2.9" ry="1.4" fill="#bfe0f6" opacity="0.64" transform="rotate(-38 1251 1123)"/><ellipse cx="1275" cy="1116" rx="2.3" ry="1.2" fill="#bfe0f6" opacity="0.50" transform="rotate(-38 1275 1116)"/><ellipse cx="1281" cy="1124" rx="1.8" ry="1.0" fill="#bfe0f6" opacity="0.41" transform="rotate(-38 1281 1124)"/><ellipse cx="1305" cy="1116" rx="2.0" ry="1.1" fill="#bfe0f6" opacity="0.45" transform="rotate(-38 1305 1116)"/><ellipse cx="1341" cy="1125" rx="2.8" ry="1.5" fill="#f4dfea" opacity="0.39" transform="rotate(-38 1341 1125)"/><ellipse cx="1365" cy="1118" rx="3.1" ry="1.7" fill="#f4dfea" opacity="0.43" transform="rotate(-38 1365 1118)"/><ellipse cx="1371" cy="1126" rx="2.9" ry="1.6" fill="#f4dfea" opacity="0.42" transform="rotate(-38 1371 1126)"/><ellipse cx="1395" cy="1118" rx="2.3" ry="1.4" fill="#bfe0f6" opacity="0.33" transform="rotate(-38 1395 1118)"/><ellipse cx="1425" cy="1119" rx="2.7" ry="1.6" fill="#f4dfea" opacity="0.42" transform="rotate(-38 1425 1119)"/><ellipse cx="1431" cy="1127" rx="1.5" ry="1.1" fill="#bfe0f6" opacity="0.24" transform="rotate(-38 1431 1127)"/><ellipse cx="1455" cy="1119" rx="2.9" ry="1.8" fill="#f4dfea" opacity="0.47" transform="rotate(-38 1455 1119)"/><ellipse cx="1107" cy="1128" rx="4.1" ry="1.6" fill="#f4dfea" opacity="0.77" transform="rotate(-38 1107 1128)"/><ellipse cx="1113" cy="1136" rx="2.5" ry="1.1" fill="#bfe0f6" opacity="0.47" transform="rotate(-38 1113 1136)"/><ellipse cx="1137" cy="1129" rx="3.4" ry="1.4" fill="#f4dfea" opacity="0.65" transform="rotate(-38 1137 1129)"/><ellipse cx="1143" cy="1137" rx="4.1" ry="1.7" fill="#f4dfea" opacity="0.80" transform="rotate(-38 1143 1137)"/><ellipse cx="1167" cy="1129" rx="3.5" ry="1.5" fill="#f4dfea" opacity="0.69" transform="rotate(-38 1167 1129)"/><ellipse cx="1173" cy="1137" rx="3.7" ry="1.6" fill="#f4dfea" opacity="0.74" transform="rotate(-38 1173 1137)"/><ellipse cx="1203" cy="1138" rx="2.2" ry="1.1" fill="#bfe0f6" opacity="0.47" transform="rotate(-38 1203 1138)"/><ellipse cx="1227" cy="1131" rx="2.1" ry="1.1" fill="#bfe0f6" opacity="0.46" transform="rotate(-38 1227 1131)"/><ellipse cx="1233" cy="1138" rx="3.1" ry="1.5" fill="#f4dfea" opacity="0.68" transform="rotate(-38 1233 1138)"/><ellipse cx="1257" cy="1131" rx="3.2" ry="1.6" fill="#f4dfea" opacity="0.71" transform="rotate(-38 1257 1131)"/><ellipse cx="1287" cy="1132" rx="3.4" ry="1.7" fill="#f4dfea" opacity="0.44" transform="rotate(-38 1287 1132)"/><ellipse cx="1293" cy="1140" rx="2.7" ry="1.4" fill="#f4dfea" opacity="0.36" transform="rotate(-38 1293 1140)"/><ellipse cx="1323" cy="1140" rx="3.1" ry="1.6" fill="#f4dfea" opacity="0.43" transform="rotate(-38 1323 1140)"/><ellipse cx="1347" cy="1133" rx="1.7" ry="1.1" fill="#bfe0f6" opacity="0.25" transform="rotate(-38 1347 1133)"/><ellipse cx="1377" cy="1134" rx="2.9" ry="1.6" fill="#f4dfea" opacity="0.43" transform="rotate(-38 1377 1134)"/><ellipse cx="1383" cy="1141" rx="2.4" ry="1.4" fill="#bfe0f6" opacity="0.36" transform="rotate(-38 1383 1141)"/><ellipse cx="1407" cy="1134" rx="2.3" ry="1.4" fill="#bfe0f6" opacity="0.36" transform="rotate(-38 1407 1134)"/><ellipse cx="1413" cy="1142" rx="2.7" ry="1.7" fill="#f4dfea" opacity="0.44" transform="rotate(-38 1413 1142)"/></g>
<g><ellipse cx="2202" cy="700" rx="0.8" ry="2.1" fill="#8fc4f0" opacity="0.09" transform="rotate(-14 2202 700)"/><ellipse cx="2216" cy="710" rx="1.3" ry="3.4" fill="#8fc4f0" opacity="0.15" transform="rotate(-14 2216 710)"/><ellipse cx="2244" cy="710" rx="0.8" ry="1.9" fill="#8fc4f0" opacity="0.08" transform="rotate(-14 2244 710)"/><ellipse cx="2258" cy="700" rx="1.2" ry="3.3" fill="#8fc4f0" opacity="0.17" transform="rotate(-14 2258 700)"/><ellipse cx="2272" cy="710" rx="1.2" ry="3.3" fill="#8fc4f0" opacity="0.24" transform="rotate(-14 2272 710)"/><ellipse cx="2286" cy="700" rx="1.1" ry="2.9" fill="#f6d8e2" opacity="0.35" transform="rotate(-14 2286 700)"/><ellipse cx="2328" cy="710" rx="1.4" ry="3.9" fill="#f6d8e2" opacity="0.84" transform="rotate(-14 2328 710)"/><ellipse cx="2342" cy="700" rx="0.7" ry="1.8" fill="#f6d8e2" opacity="0.25" transform="rotate(-14 2342 700)"/><ellipse cx="2356" cy="710" rx="1.3" ry="3.6" fill="#f6d8e2" opacity="0.33" transform="rotate(-14 2356 710)"/><ellipse cx="2370" cy="700" rx="1.0" ry="2.8" fill="#8fc4f0" opacity="0.16" transform="rotate(-14 2370 700)"/><ellipse cx="2384" cy="710" rx="0.9" ry="2.3" fill="#8fc4f0" opacity="0.10" transform="rotate(-14 2384 710)"/><ellipse cx="2202" cy="721" rx="0.9" ry="2.3" fill="#8fc4f0" opacity="0.09" transform="rotate(-14 2202 721)"/><ellipse cx="2216" cy="731" rx="0.8" ry="2.1" fill="#8fc4f0" opacity="0.09" transform="rotate(-14 2216 731)"/><ellipse cx="2244" cy="731" rx="1.3" ry="3.6" fill="#8fc4f0" opacity="0.17" transform="rotate(-14 2244 731)"/><ellipse cx="2258" cy="721" rx="1.4" ry="3.7" fill="#8fc4f0" opacity="0.20" transform="rotate(-14 2258 721)"/><ellipse cx="2272" cy="731" rx="0.9" ry="2.3" fill="#8fc4f0" opacity="0.16" transform="rotate(-14 2272 731)"/><ellipse cx="2300" cy="731" rx="0.7" ry="1.8" fill="#f6d8e2" opacity="0.31" transform="rotate(-14 2300 731)"/><ellipse cx="2314" cy="721" rx="1.0" ry="2.8" fill="#f6d8e2" opacity="0.62" transform="rotate(-14 2314 721)"/><ellipse cx="2328" cy="731" rx="0.8" ry="2.1" fill="#f6d8e2" opacity="0.41" transform="rotate(-14 2328 731)"/><ellipse cx="2342" cy="721" rx="0.9" ry="2.5" fill="#f6d8e2" opacity="0.36" transform="rotate(-14 2342 721)"/><ellipse cx="2356" cy="731" rx="0.7" ry="1.8" fill="#f6d8e2" opacity="0.15" transform="rotate(-14 2356 731)"/><ellipse cx="2384" cy="731" rx="1.4" ry="3.8" fill="#8fc4f0" opacity="0.18" transform="rotate(-14 2384 731)"/><ellipse cx="2202" cy="742" rx="1.4" ry="3.7" fill="#8fc4f0" opacity="0.17" transform="rotate(-14 2202 742)"/><ellipse cx="2216" cy="752" rx="1.0" ry="2.6" fill="#8fc4f0" opacity="0.11" transform="rotate(-14 2216 752)"/><ellipse cx="2230" cy="742" rx="1.4" ry="4.0" fill="#8fc4f0" opacity="0.18" transform="rotate(-14 2230 742)"/><ellipse cx="2244" cy="752" rx="1.0" ry="2.6" fill="#8fc4f0" opacity="0.11" transform="rotate(-14 2244 752)"/><ellipse cx="2272" cy="752" rx="0.8" ry="2.0" fill="#8fc4f0" opacity="0.14" transform="rotate(-14 2272 752)"/><ellipse cx="2286" cy="742" rx="0.9" ry="2.4" fill="#f6d8e2" opacity="0.28" transform="rotate(-14 2286 742)"/><ellipse cx="2300" cy="752" rx="0.9" ry="2.3" fill="#f6d8e2" opacity="0.42" transform="rotate(-14 2300 752)"/><ellipse cx="2328" cy="752" rx="1.0" ry="2.6" fill="#f6d8e2" opacity="0.53" transform="rotate(-14 2328 752)"/><ellipse cx="2342" cy="742" rx="1.4" ry="3.7" fill="#f6d8e2" opacity="0.56" transform="rotate(-14 2342 742)"/><ellipse cx="2356" cy="752" rx="1.2" ry="3.2" fill="#f6d8e2" opacity="0.29" transform="rotate(-14 2356 752)"/><ellipse cx="2370" cy="742" rx="1.4" ry="3.8" fill="#8fc4f0" opacity="0.23" transform="rotate(-14 2370 742)"/><ellipse cx="2202" cy="763" rx="1.2" ry="3.4" fill="#8fc4f0" opacity="0.15" transform="rotate(-14 2202 763)"/><ellipse cx="2216" cy="773" rx="1.3" ry="3.4" fill="#8fc4f0" opacity="0.15" transform="rotate(-14 2216 773)"/><ellipse cx="2258" cy="763" rx="1.1" ry="2.8" fill="#8fc4f0" opacity="0.15" transform="rotate(-14 2258 763)"/><ellipse cx="2272" cy="773" rx="0.9" ry="2.4" fill="#8fc4f0" opacity="0.18" transform="rotate(-14 2272 773)"/><ellipse cx="2286" cy="763" rx="1.4" ry="3.9" fill="#f6d8e2" opacity="0.49" transform="rotate(-14 2286 763)"/><ellipse cx="2300" cy="773" rx="1.2" ry="3.2" fill="#f6d8e2" opacity="0.60" transform="rotate(-14 2300 773)"/><ellipse cx="2314" cy="763" rx="1.1" ry="3.0" fill="#f6d8e2" opacity="0.68" transform="rotate(-14 2314 763)"/><ellipse cx="2342" cy="763" rx="0.9" ry="2.2" fill="#f6d8e2" opacity="0.32" transform="rotate(-14 2342 763)"/><ellipse cx="2356" cy="773" rx="1.1" ry="2.9" fill="#f6d8e2" opacity="0.26" transform="rotate(-14 2356 773)"/><ellipse cx="2370" cy="763" rx="1.4" ry="3.8" fill="#8fc4f0" opacity="0.22" transform="rotate(-14 2370 763)"/><ellipse cx="2230" cy="784" rx="0.9" ry="2.3" fill="#8fc4f0" opacity="0.10" transform="rotate(-14 2230 784)"/><ellipse cx="2244" cy="794" rx="1.1" ry="3.0" fill="#8fc4f0" opacity="0.14" transform="rotate(-14 2244 794)"/><ellipse cx="2258" cy="784" rx="1.3" ry="3.4" fill="#8fc4f0" opacity="0.18" transform="rotate(-14 2258 784)"/><ellipse cx="2272" cy="794" rx="1.0" ry="2.7" fill="#8fc4f0" opacity="0.20" transform="rotate(-14 2272 794)"/><ellipse cx="2286" cy="784" rx="1.0" ry="2.6" fill="#f6d8e2" opacity="0.31" transform="rotate(-14 2286 784)"/><ellipse cx="2300" cy="794" rx="0.8" ry="1.9" fill="#f6d8e2" opacity="0.33" transform="rotate(-14 2300 794)"/><ellipse cx="2328" cy="794" rx="1.1" ry="2.9" fill="#f6d8e2" opacity="0.60" transform="rotate(-14 2328 794)"/><ellipse cx="2342" cy="784" rx="1.3" ry="3.7" fill="#f6d8e2" opacity="0.55" transform="rotate(-14 2342 784)"/><ellipse cx="2356" cy="794" rx="0.9" ry="2.4" fill="#f6d8e2" opacity="0.21" transform="rotate(-14 2356 794)"/><ellipse cx="2370" cy="784" rx="1.0" ry="2.7" fill="#8fc4f0" opacity="0.15" transform="rotate(-14 2370 784)"/><ellipse cx="2384" cy="794" rx="1.4" ry="3.9" fill="#8fc4f0" opacity="0.19" transform="rotate(-14 2384 794)"/><ellipse cx="2216" cy="815" rx="0.7" ry="1.9" fill="#8fc4f0" opacity="0.08" transform="rotate(-14 2216 815)"/><ellipse cx="2230" cy="805" rx="1.4" ry="3.7" fill="#8fc4f0" opacity="0.17" transform="rotate(-14 2230 805)"/><ellipse cx="2258" cy="805" rx="1.0" ry="2.6" fill="#8fc4f0" opacity="0.14" transform="rotate(-14 2258 805)"/><ellipse cx="2272" cy="815" rx="1.3" ry="3.6" fill="#8fc4f0" opacity="0.27" transform="rotate(-14 2272 815)"/><ellipse cx="2286" cy="805" rx="1.4" ry="3.9" fill="#f6d8e2" opacity="0.49" transform="rotate(-14 2286 805)"/><ellipse cx="2314" cy="805" rx="1.1" ry="2.9" fill="#f6d8e2" opacity="0.66" transform="rotate(-14 2314 805)"/><ellipse cx="2328" cy="815" rx="1.4" ry="3.8" fill="#f6d8e2" opacity="0.82" transform="rotate(-14 2328 815)"/><ellipse cx="2342" cy="805" rx="1.2" ry="3.2" fill="#f6d8e2" opacity="0.48" transform="rotate(-14 2342 805)"/><ellipse cx="2356" cy="815" rx="1.0" ry="2.8" fill="#f6d8e2" opacity="0.25" transform="rotate(-14 2356 815)"/><ellipse cx="2370" cy="805" rx="0.7" ry="1.9" fill="#8fc4f0" opacity="0.10" transform="rotate(-14 2370 805)"/><ellipse cx="2384" cy="815" rx="0.9" ry="2.3" fill="#8fc4f0" opacity="0.10" transform="rotate(-14 2384 815)"/><ellipse cx="2202" cy="826" rx="1.2" ry="3.2" fill="#8fc4f0" opacity="0.14" transform="rotate(-14 2202 826)"/><ellipse cx="2216" cy="836" rx="0.8" ry="2.1" fill="#8fc4f0" opacity="0.09" transform="rotate(-14 2216 836)"/><ellipse cx="2230" cy="826" rx="1.2" ry="3.2" fill="#8fc4f0" opacity="0.14" transform="rotate(-14 2230 826)"/><ellipse cx="2258" cy="826" rx="1.1" ry="2.9" fill="#8fc4f0" opacity="0.15" transform="rotate(-14 2258 826)"/><ellipse cx="2272" cy="836" rx="1.0" ry="2.6" fill="#8fc4f0" opacity="0.19" transform="rotate(-14 2272 836)"/><ellipse cx="2300" cy="836" rx="0.9" ry="2.5" fill="#f6d8e2" opacity="0.44" transform="rotate(-14 2300 836)"/><ellipse cx="2314" cy="826" rx="1.4" ry="3.9" fill="#f6d8e2" opacity="0.90" transform="rotate(-14 2314 826)"/><ellipse cx="2328" cy="836" rx="1.4" ry="3.7" fill="#f6d8e2" opacity="0.79" transform="rotate(-14 2328 836)"/><ellipse cx="2342" cy="826" rx="0.9" ry="2.3" fill="#f6d8e2" opacity="0.33" transform="rotate(-14 2342 826)"/><ellipse cx="2356" cy="836" rx="1.4" ry="3.9" fill="#f6d8e2" opacity="0.36" transform="rotate(-14 2356 836)"/><ellipse cx="2384" cy="836" rx="1.1" ry="2.9" fill="#8fc4f0" opacity="0.13" transform="rotate(-14 2384 836)"/><ellipse cx="2202" cy="847" rx="1.0" ry="2.7" fill="#8fc4f0" opacity="0.12" transform="rotate(-14 2202 847)"/><ellipse cx="2216" cy="857" rx="1.2" ry="3.2" fill="#8fc4f0" opacity="0.14" transform="rotate(-14 2216 857)"/><ellipse cx="2244" cy="857" rx="1.0" ry="2.5" fill="#8fc4f0" opacity="0.11" transform="rotate(-14 2244 857)"/><ellipse cx="2272" cy="857" rx="1.3" ry="3.5" fill="#8fc4f0" opacity="0.27" transform="rotate(-14 2272 857)"/><ellipse cx="2286" cy="847" rx="1.1" ry="2.9" fill="#f6d8e2" opacity="0.35" transform="rotate(-14 2286 847)"/><ellipse cx="2300" cy="857" rx="1.4" ry="3.9" fill="#f6d8e2" opacity="0.75" transform="rotate(-14 2300 857)"/><ellipse cx="2314" cy="847" rx="1.3" ry="3.6" fill="#f6d8e2" opacity="0.82" transform="rotate(-14 2314 847)"/><ellipse cx="2328" cy="857" rx="0.9" ry="2.3" fill="#f6d8e2" opacity="0.45" transform="rotate(-14 2328 857)"/><ellipse cx="2342" cy="847" rx="0.9" ry="2.4" fill="#f6d8e2" opacity="0.35" transform="rotate(-14 2342 847)"/><ellipse cx="2370" cy="847" rx="0.9" ry="2.3" fill="#8fc4f0" opacity="0.13" transform="rotate(-14 2370 847)"/><ellipse cx="2384" cy="857" rx="1.2" ry="3.2" fill="#8fc4f0" opacity="0.15" transform="rotate(-14 2384 857)"/><ellipse cx="2212" cy="868" rx="0.8" ry="2.1" fill="#8fc4f0" opacity="0.09" transform="rotate(-14 2212 868)"/><ellipse cx="2229" cy="878" rx="0.9" ry="2.3" fill="#8fc4f0" opacity="0.10" transform="rotate(-14 2229 878)"/><ellipse cx="2257" cy="878" rx="0.8" ry="1.9" fill="#8fc4f0" opacity="0.08" transform="rotate(-14 2257 878)"/><ellipse cx="2268" cy="868" rx="1.4" ry="3.7" fill="#8fc4f0" opacity="0.21" transform="rotate(-14 2268 868)"/><ellipse cx="2285" cy="878" rx="1.2" ry="3.4" fill="#8fc4f0" opacity="0.31" transform="rotate(-14 2285 878)"/><ellipse cx="2296" cy="868" rx="1.4" ry="3.8" fill="#f6d8e2" opacity="0.57" transform="rotate(-14 2296 868)"/><ellipse cx="2313" cy="878" rx="0.9" ry="2.2" fill="#f6d8e2" opacity="0.45" transform="rotate(-14 2313 878)"/><ellipse cx="2341" cy="878" rx="1.2" ry="3.2" fill="#f6d8e2" opacity="0.55" transform="rotate(-14 2341 878)"/><ellipse cx="2352" cy="868" rx="1.0" ry="2.6" fill="#f6d8e2" opacity="0.29" transform="rotate(-14 2352 868)"/><ellipse cx="2380" cy="868" rx="0.9" ry="2.4" fill="#8fc4f0" opacity="0.11" transform="rotate(-14 2380 868)"/><ellipse cx="2219" cy="889" rx="1.4" ry="3.9" fill="#8fc4f0" opacity="0.18" transform="rotate(-14 2219 889)"/><ellipse cx="2236" cy="899" rx="1.0" ry="2.6" fill="#8fc4f0" opacity="0.11" transform="rotate(-14 2236 899)"/><ellipse cx="2247" cy="889" rx="1.3" ry="3.6" fill="#8fc4f0" opacity="0.16" transform="rotate(-14 2247 889)"/><ellipse cx="2264" cy="899" rx="0.8" ry="1.9" fill="#8fc4f0" opacity="0.08" transform="rotate(-14 2264 899)"/><ellipse cx="2275" cy="889" rx="1.0" ry="2.6" fill="#8fc4f0" opacity="0.15" transform="rotate(-14 2275 889)"/><ellipse cx="2292" cy="899" rx="0.9" ry="2.2" fill="#8fc4f0" opacity="0.21" transform="rotate(-14 2292 899)"/><ellipse cx="2320" cy="899" rx="1.0" ry="2.7" fill="#f6d8e2" opacity="0.59" transform="rotate(-14 2320 899)"/><ellipse cx="2359" cy="889" rx="1.4" ry="3.8" fill="#f6d8e2" opacity="0.36" transform="rotate(-14 2359 889)"/><ellipse cx="2376" cy="899" rx="1.3" ry="3.4" fill="#8fc4f0" opacity="0.19" transform="rotate(-14 2376 899)"/><ellipse cx="2387" cy="889" rx="1.0" ry="2.5" fill="#8fc4f0" opacity="0.11" transform="rotate(-14 2387 889)"/><ellipse cx="2225" cy="910" rx="1.4" ry="3.9" fill="#8fc4f0" opacity="0.18" transform="rotate(-14 2225 910)"/><ellipse cx="2242" cy="920" rx="0.9" ry="2.4" fill="#8fc4f0" opacity="0.10" transform="rotate(-14 2242 920)"/><ellipse cx="2253" cy="910" rx="0.9" ry="2.5" fill="#8fc4f0" opacity="0.11" transform="rotate(-14 2253 910)"/><ellipse cx="2270" cy="920" rx="0.7" ry="1.8" fill="#8fc4f0" opacity="0.08" transform="rotate(-14 2270 920)"/><ellipse cx="2281" cy="910" rx="1.4" ry="3.8" fill="#8fc4f0" opacity="0.24" transform="rotate(-14 2281 910)"/><ellipse cx="2309" cy="910" rx="0.9" ry="2.3" fill="#f6d8e2" opacity="0.39" transform="rotate(-14 2309 910)"/><ellipse cx="2326" cy="920" rx="1.4" ry="3.9" fill="#f6d8e2" opacity="0.90" transform="rotate(-14 2326 920)"/><ellipse cx="2337" cy="910" rx="1.0" ry="2.6" fill="#f6d8e2" opacity="0.53" transform="rotate(-14 2337 910)"/><ellipse cx="2354" cy="920" rx="1.0" ry="2.7" fill="#f6d8e2" opacity="0.33" transform="rotate(-14 2354 920)"/><ellipse cx="2382" cy="920" rx="1.3" ry="3.5" fill="#8fc4f0" opacity="0.18" transform="rotate(-14 2382 920)"/><ellipse cx="2393" cy="910" rx="1.3" ry="3.6" fill="#8fc4f0" opacity="0.16" transform="rotate(-14 2393 910)"/><ellipse cx="2232" cy="931" rx="1.2" ry="3.1" fill="#8fc4f0" opacity="0.14" transform="rotate(-14 2232 931)"/><ellipse cx="2249" cy="941" rx="1.0" ry="2.5" fill="#8fc4f0" opacity="0.11" transform="rotate(-14 2249 941)"/><ellipse cx="2277" cy="941" rx="0.9" ry="2.2" fill="#8fc4f0" opacity="0.10" transform="rotate(-14 2277 941)"/><ellipse cx="2305" cy="941" rx="0.7" ry="1.9" fill="#f6d8e2" opacity="0.22" transform="rotate(-14 2305 941)"/><ellipse cx="2316" cy="931" rx="1.0" ry="2.5" fill="#f6d8e2" opacity="0.47" transform="rotate(-14 2316 931)"/><ellipse cx="2333" cy="941" rx="1.4" ry="3.7" fill="#f6d8e2" opacity="0.86" transform="rotate(-14 2333 941)"/><ellipse cx="2361" cy="941" rx="0.8" ry="2.0" fill="#f6d8e2" opacity="0.19" transform="rotate(-14 2361 941)"/><ellipse cx="2372" cy="931" rx="1.2" ry="3.3" fill="#8fc4f0" opacity="0.21" transform="rotate(-14 2372 931)"/><ellipse cx="2389" cy="941" rx="0.9" ry="2.3" fill="#8fc4f0" opacity="0.10" transform="rotate(-14 2389 941)"/><ellipse cx="2400" cy="931" rx="1.2" ry="3.1" fill="#8fc4f0" opacity="0.14" transform="rotate(-14 2400 931)"/><ellipse cx="2238" cy="952" rx="1.3" ry="3.4" fill="#8fc4f0" opacity="0.15" transform="rotate(-14 2238 952)"/><ellipse cx="2266" cy="952" rx="1.3" ry="3.6" fill="#8fc4f0" opacity="0.17" transform="rotate(-14 2266 952)"/><ellipse cx="2283" cy="962" rx="1.1" ry="3.0" fill="#8fc4f0" opacity="0.15" transform="rotate(-14 2283 962)"/><ellipse cx="2311" cy="962" rx="0.9" ry="2.3" fill="#f6d8e2" opacity="0.33" transform="rotate(-14 2311 962)"/><ellipse cx="2322" cy="952" rx="0.8" ry="2.1" fill="#f6d8e2" opacity="0.42" transform="rotate(-14 2322 952)"/><ellipse cx="2339" cy="962" rx="1.1" ry="3.0" fill="#f6d8e2" opacity="0.65" transform="rotate(-14 2339 962)"/><ellipse cx="2350" cy="952" rx="1.0" ry="2.7" fill="#f6d8e2" opacity="0.41" transform="rotate(-14 2350 952)"/><ellipse cx="2367" cy="962" rx="1.1" ry="2.9" fill="#8fc4f0" opacity="0.21" transform="rotate(-14 2367 962)"/><ellipse cx="2378" cy="952" rx="1.3" ry="3.5" fill="#8fc4f0" opacity="0.19" transform="rotate(-14 2378 952)"/><ellipse cx="2244" cy="973" rx="1.1" ry="2.8" fill="#8fc4f0" opacity="0.12" transform="rotate(-14 2244 973)"/><ellipse cx="2261" cy="983" rx="1.3" ry="3.6" fill="#8fc4f0" opacity="0.16" transform="rotate(-14 2261 983)"/><ellipse cx="2272" cy="973" rx="0.7" ry="1.9" fill="#8fc4f0" opacity="0.08" transform="rotate(-14 2272 973)"/><ellipse cx="2300" cy="973" rx="1.4" ry="3.9" fill="#8fc4f0" opacity="0.36" transform="rotate(-14 2300 973)"/><ellipse cx="2317" cy="983" rx="1.4" ry="3.8" fill="#f6d8e2" opacity="0.71" transform="rotate(-14 2317 983)"/><ellipse cx="2328" cy="973" rx="1.3" ry="3.7" fill="#f6d8e2" opacity="0.85" transform="rotate(-14 2328 973)"/><ellipse cx="2345" cy="983" rx="0.9" ry="2.4" fill="#f6d8e2" opacity="0.40" transform="rotate(-14 2345 983)"/><ellipse cx="2373" cy="983" rx="1.1" ry="3.1" fill="#8fc4f0" opacity="0.17" transform="rotate(-14 2373 983)"/><ellipse cx="2384" cy="973" rx="0.9" ry="2.3" fill="#8fc4f0" opacity="0.10" transform="rotate(-14 2384 973)"/><ellipse cx="2251" cy="994" rx="0.8" ry="2.1" fill="#8fc4f0" opacity="0.09" transform="rotate(-14 2251 994)"/><ellipse cx="2268" cy="1004" rx="0.9" ry="2.4" fill="#8fc4f0" opacity="0.10" transform="rotate(-14 2268 1004)"/><ellipse cx="2279" cy="994" rx="1.2" ry="3.2" fill="#8fc4f0" opacity="0.15" transform="rotate(-14 2279 994)"/><ellipse cx="2296" cy="1004" rx="0.7" ry="1.8" fill="#8fc4f0" opacity="0.10" transform="rotate(-14 2296 1004)"/><ellipse cx="2324" cy="1004" rx="0.9" ry="2.5" fill="#f6d8e2" opacity="0.50" transform="rotate(-14 2324 1004)"/><ellipse cx="2335" cy="994" rx="1.3" ry="3.5" fill="#f6d8e2" opacity="0.80" transform="rotate(-14 2335 994)"/><ellipse cx="2363" cy="994" rx="1.0" ry="2.7" fill="#8fc4f0" opacity="0.20" transform="rotate(-14 2363 994)"/><ellipse cx="2391" cy="994" rx="0.8" ry="2.2" fill="#8fc4f0" opacity="0.09" transform="rotate(-14 2391 994)"/><ellipse cx="2257" cy="1015" rx="1.0" ry="2.7" fill="#8fc4f0" opacity="0.12" transform="rotate(-14 2257 1015)"/><ellipse cx="2274" cy="1025" rx="0.9" ry="2.5" fill="#8fc4f0" opacity="0.11" transform="rotate(-14 2274 1025)"/><ellipse cx="2285" cy="1015" rx="0.9" ry="2.5" fill="#8fc4f0" opacity="0.11" transform="rotate(-14 2285 1015)"/><ellipse cx="2302" cy="1025" rx="1.0" ry="2.6" fill="#8fc4f0" opacity="0.19" transform="rotate(-14 2302 1025)"/><ellipse cx="2313" cy="1015" rx="1.3" ry="3.7" fill="#f6d8e2" opacity="0.53" transform="rotate(-14 2313 1015)"/><ellipse cx="2341" cy="1015" rx="1.2" ry="3.4" fill="#f6d8e2" opacity="0.66" transform="rotate(-14 2341 1015)"/><ellipse cx="2358" cy="1025" rx="0.7" ry="1.8" fill="#8fc4f0" opacity="0.14" transform="rotate(-14 2358 1025)"/><ellipse cx="2369" cy="1015" rx="1.0" ry="2.7" fill="#8fc4f0" opacity="0.15" transform="rotate(-14 2369 1015)"/><ellipse cx="2263" cy="1036" rx="1.0" ry="2.7" fill="#8fc4f0" opacity="0.12" transform="rotate(-14 2263 1036)"/><ellipse cx="2291" cy="1036" rx="0.7" ry="1.8" fill="#8fc4f0" opacity="0.08" transform="rotate(-14 2291 1036)"/><ellipse cx="2308" cy="1046" rx="1.2" ry="3.2" fill="#8fc4f0" opacity="0.30" transform="rotate(-14 2308 1046)"/><ellipse cx="2319" cy="1036" rx="0.8" ry="2.0" fill="#f6d8e2" opacity="0.33" transform="rotate(-14 2319 1036)"/><ellipse cx="2336" cy="1046" rx="1.0" ry="2.6" fill="#f6d8e2" opacity="0.55" transform="rotate(-14 2336 1046)"/><ellipse cx="2347" cy="1036" rx="0.8" ry="2.1" fill="#f6d8e2" opacity="0.28" transform="rotate(-14 2347 1036)"/><ellipse cx="2364" cy="1046" rx="1.1" ry="2.9" fill="#8fc4f0" opacity="0.16" transform="rotate(-14 2364 1046)"/><ellipse cx="2375" cy="1036" rx="0.8" ry="2.0" fill="#8fc4f0" opacity="0.09" transform="rotate(-14 2375 1036)"/><ellipse cx="2270" cy="1057" rx="1.3" ry="3.5" fill="#8fc4f0" opacity="0.16" transform="rotate(-14 2270 1057)"/><ellipse cx="2298" cy="1057" rx="1.4" ry="3.8" fill="#8fc4f0" opacity="0.21" transform="rotate(-14 2298 1057)"/><ellipse cx="2326" cy="1057" rx="1.4" ry="3.8" fill="#f6d8e2" opacity="0.84" transform="rotate(-14 2326 1057)"/><ellipse cx="2343" cy="1067" rx="1.4" ry="3.8" fill="#f6d8e2" opacity="0.64" transform="rotate(-14 2343 1067)"/><ellipse cx="2371" cy="1067" rx="1.3" ry="3.5" fill="#8fc4f0" opacity="0.16" transform="rotate(-14 2371 1067)"/><ellipse cx="2276" cy="1078" rx="1.0" ry="2.7" fill="#8fc4f0" opacity="0.12" transform="rotate(-14 2276 1078)"/><ellipse cx="2304" cy="1078" rx="0.9" ry="2.3" fill="#8fc4f0" opacity="0.13" transform="rotate(-14 2304 1078)"/><ellipse cx="2321" cy="1088" rx="1.1" ry="2.9" fill="#f6d8e2" opacity="0.50" transform="rotate(-14 2321 1088)"/><ellipse cx="2332" cy="1078" rx="0.8" ry="2.1" fill="#f6d8e2" opacity="0.44" transform="rotate(-14 2332 1078)"/><ellipse cx="2349" cy="1088" rx="1.2" ry="3.4" fill="#f6d8e2" opacity="0.34" transform="rotate(-14 2349 1088)"/><ellipse cx="2360" cy="1078" rx="0.7" ry="1.9" fill="#8fc4f0" opacity="0.10" transform="rotate(-14 2360 1078)"/><ellipse cx="2311" cy="1099" rx="1.2" ry="3.1" fill="#8fc4f0" opacity="0.24" transform="rotate(-14 2311 1099)"/><ellipse cx="2328" cy="1109" rx="1.2" ry="3.2" fill="#f6d8e2" opacity="0.69" transform="rotate(-14 2328 1109)"/><ellipse cx="2339" cy="1099" rx="1.0" ry="2.7" fill="#f6d8e2" opacity="0.51" transform="rotate(-14 2339 1099)"/><ellipse cx="2356" cy="1109" rx="1.0" ry="2.7" fill="#8fc4f0" opacity="0.15" transform="rotate(-14 2356 1109)"/><ellipse cx="2367" cy="1099" rx="1.0" ry="2.8" fill="#8fc4f0" opacity="0.12" transform="rotate(-14 2367 1099)"/><ellipse cx="2289" cy="1120" rx="0.7" ry="1.9" fill="#8fc4f0" opacity="0.07" transform="rotate(-14 2289 1120)"/><ellipse cx="2306" cy="1130" rx="1.1" ry="2.9" fill="#8fc4f0" opacity="0.14" transform="rotate(-14 2306 1130)"/><ellipse cx="2317" cy="1120" rx="1.3" ry="3.4" fill="#8fc4f0" opacity="0.38" transform="rotate(-14 2317 1120)"/><ellipse cx="2362" cy="1130" rx="0.8" ry="2.1" fill="#8fc4f0" opacity="0.09" transform="rotate(-14 2362 1130)"/></g>
</svg>
<div class="a" style="left:6px;top:13px;width:112px;height:102px;background:rgba(255,255,255,.1)"></div>
<svg width="0" height="0" style="position:absolute"><defs>
<linearGradient id="dF1" x1="0" y1="0" x2="1" y2="1"><stop offset="0" stop-color="#ffe79c"/><stop offset="1" stop-color="#ffcb4a"/></linearGradient>
<linearGradient id="dF0" x1="0" y1="0" x2="0" y2="1"><stop offset="0" stop-color="#fbbf24"/><stop offset="1" stop-color="#f2a900"/></linearGradient>
<symbol id="dFolder" viewBox="0 0 64 50"><path d="M0 4Q0 .6 3.4 .6H21.6Q23.4.6 24.6 2L28 6.6H60.6Q64 6.600 64 10V20H0Z" fill="url(#dF0)"/><path d="M0 14Q0 11 3 11H22.4Q24.4 11 25.8 9.800L28.400 7.600Q29.600 6.600 31.400 6.600H60.800Q64 6.600 64 9.800V46.400Q64 49.600 60.800 49.600H3.200Q0 49.600 0 46.400Z" fill="url(#dF1)"/><path d="M1 48.900H63" stroke="#eaa512" stroke-width="1.200" opacity=".7"/></symbol>
<symbol id="dShort" viewBox="0 0 16 16"><rect x="0" y="0" width="16" height="16" fill="#fff"/><rect x="0" y="0" width="16" height="16" fill="none" stroke="#d8dde2" stroke-width=".8"/><path d="M4 12L11.600 4.400M6 4H12V10" fill="none" stroke="#1b78d2" stroke-width="2"/></symbol>
</defs></svg>
<svg class="a" style="left:30px;top:23px" width="64" height="50" viewBox="0 0 64 50"><use href="#dFolder"/><circle cx="32" cy="21.300" r="8" fill="#c58b00"/><path d="M18.400 31H45.600Q46 37 41 41Q32 46.500 23 41Q18 37 18.400 31Z" fill="#b47d00"/></svg>
<div class="dl" style="left:-3px;top:91px">IT Admin</div>
<svg class="a" style="left:144px;top:23px" width="64" height="50" viewBox="0 0 64 50"><use href="#dFolder"/></svg>
<div class="dl" style="left:111px;top:91px">Malcolm<br>Soto</div>
<svg class="a" style="left:30px;top:178px" width="64" height="56" viewBox="0 0 64 56"><defs><linearGradient id="pc1" x1="0" y1="0" x2="1" y2="1"><stop offset="0" stop-color="#41e3e8"/><stop offset=".5" stop-color="#20a8dc"/><stop offset="1" stop-color="#0b6cc6"/></linearGradient></defs>
<rect x="28" y="45" width="8.400" height="7.600" fill="#d2d4d8"/><rect x="16.600" y="52" width="30.600" height="2" fill="#c6c8cc"/><rect x="16.600" y="53.600" width="30.600" height="2" fill="#3c3c4a"/>
<rect x=".6" y=".8" width="62.800" height="45" rx="2.600" fill="url(#pc1)" stroke="#474d58" stroke-width="1.300"/></svg>
<div class="dl" style="left:-3px;top:247px">This PC</div>
<svg class="a" style="left:34px;top:330px" width="56" height="64" viewBox="0 0 56 64"><defs><linearGradient id="rb1" x1="0" y1="0" x2="1" y2="0"><stop offset="0" stop-color="#dfe5ea"/><stop offset=".5" stop-color="#eef1f4"/><stop offset="1" stop-color="#d5dbe1"/></linearGradient></defs>
<path d="M1 5Q1 1 5 1H51Q55 1 55 5L48.600 62.600H7.600Z" fill="url(#rb1)" opacity=".92"/><path d="M1.600 4.600Q2 1 5 1H51Q54.400 1 54.600 4.600Q40 7.600 28 7.600Q14 7.600 1.600 4.600Z" fill="#cfd5db" opacity=".9"/>
<path d="M7.200 55.500H48.900L48.600 62.600H7.600Z" fill="#b9bfc6"/>
<g transform="translate(28.400 33.200)"><g id="rbA"><path d="M-5.500 -16H5.200L10 -8L13.200 -9.800L10.800 -.8L1.800 -3.200L5 -5.100L2 -10.200H-2.600Z" fill="#1e8fe4"/><path d="M-5.500 -16L-2.600 -10.200L-6.200 -4L-12.400 -7.600Z" fill="#0f6ac6"/></g><use href="#rbA" transform="rotate(120)"/><use href="#rbA" transform="rotate(240)"/></g></svg>
<div class="dl" style="left:-3px;top:403px;letter-spacing:-.95px">Recycle Bin</div>
<svg class="a" style="left:26px;top:490px" width="72" height="55" viewBox="0 0 72 55"><defs><linearGradient id="cp1" x1="0" y1="0" x2="0" y2="1"><stop offset="0" stop-color="#2eb6ee"/><stop offset="1" stop-color="#1a8ee0"/></linearGradient><linearGradient id="cp2" x1="0" y1="0" x2="0" y2="1"><stop offset="0" stop-color="#28a4ea"/><stop offset="1" stop-color="#1478d6"/></linearGradient></defs>
<rect x="0" y=".6" width="72" height="54" rx="3" fill="url(#cp1)"/><rect x="4.400" y="5" width="63.200" height="45" fill="#a9dcf5"/>
<circle cx="22.800" cy="23.400" r="14" fill="url(#cp2)"/><path d="M23.400 22.800V8.800A14 14 0 0 1 37.400 22.800Z" fill="#f7941c" stroke="#a9dcf5" stroke-width="1"/>
<path d="M37 23.600H43.600Q45 23.600 45 22.200V14Q45 12.600 46.400 12.600H51" fill="none" stroke="#1464c0" stroke-width="1.600"/>
<g><rect x="49.600" y="9.600" width="13.600" height="6.400" rx="3.200" fill="#fff"/><circle cx="59.800" cy="12.800" r="3.200" fill="#1464c0"/><rect x="49.600" y="19.600" width="13.600" height="6.400" rx="3.200" fill="#fff"/><circle cx="59.800" cy="22.800" r="3.200" fill="#1464c0"/><rect x="49.600" y="29.800" width="13.600" height="6.400" rx="3.200" fill="#fff"/><circle cx="52.800" cy="33" r="3.200" fill="#1464c0"/></g>
<path d="M9 43.200H33" stroke="#f7941c" stroke-width="2"/><path d="M39 43.200H63" stroke="#1a80dc" stroke-width="2"/><circle cx="36" cy="43.200" r="2.800" fill="#1464c0" stroke="#fff" stroke-width="1.200"/></svg>
<div class="dl" style="left:-3px;top:559px;letter-spacing:-.2px">Control Panel</div>
<svg class="a" style="left:26px;top:638px" width="73" height="73" viewBox="0 0 73 73"><defs><linearGradient id="az1" gradientUnits="userSpaceOnUse" x1="0" y1="0" x2="0" y2="46"><stop offset="0" stop-color="#6fdffc"/><stop offset="1" stop-color="#1a98e6"/></linearGradient></defs>
<g fill="url(#az1)"><circle cx="37.700" cy="18.800" r="18.600"/><circle cx="12.600" cy="31.600" r="12.400"/><circle cx="60" cy="33.400" r="12.200"/><rect x="12" y="26" width="48" height="19.800"/></g>
<rect x="7" y="22" width="32" height="49.400" fill="#a9a9a9"/><rect x="7" y="22" width="32" height="49.400" fill="none" stroke="#b8b8b8" stroke-width=".6"/>
<rect x="11.600" y="28" width="23" height="7.200" rx="3.600" fill="#0b2f6c"/><circle cx="15.600" cy="31.600" r="2.300" fill="#55e3f8"/><rect x="11.600" y="39.400" width="23" height="7.200" rx="3.600" fill="#0b2f6c"/><circle cx="15.600" cy="43" r="2.300" fill="#55e3f8"/>
<circle cx="54" cy="53.800" r="18" fill="#9b59e4"/>
<path d="M40 44.500Q48 43.600 54 38.500Q60 43.600 68 44.500Q68.500 54 65 60Q61 66.500 54 69.600Q47 66.500 43 60Q39.500 54 40 44.500Z" fill="#1b9be8"/><path d="M54 38.500Q60 43.600 68 44.500L68.300 53.500H54Z" fill="#ffcf00"/><path d="M54 53.500V69.600Q47 66.500 43 60Q40.600 56.500 40.100 53.500Z" fill="#ffc200"/>
<svg x="0" y="55.500" width="16" height="16"><use href="#dShort"/></svg></svg>
<div class="dl" style="left:-3px;top:715px">Azure AD<br>Connect</div>
<svg class="a" style="left:26px;top:793.500px" width="72.500" height="72.500"><use href="#iEdge"/></svg>
<svg class="a" style="left:26px;top:850px" width="16" height="16"><use href="#dShort"/></svg>
<div class="dl" style="left:-3px;top:871px">Microsoft<br>Edge</div>
<div class="a" style="left:240px;top:33px;width:1498px;height:890px;border:1px solid rgba(120,124,128,.45)"></div>
<div class="a" style="left:241px;top:34px;width:1496px;height:888px;border:1px solid rgba(80,130,175,.22)"></div>
<div class="a" id="adw" style="left:242px;top:35px;width:1494px;height:886px;background:#f0f0f0"></div>
<div class="a" style="left:242px;top:35px;width:1494px;height:45px;background:#f3f3f3"></div>
<svg class="a" style="left:257px;top:46px" width="19" height="23"><use href="#iAD"/></svg>
<div class="tx" style="left:287px;top:46px;color:#8f8f8f;font-size:17.7px;line-height:22px">Active Directory Users and Computers</div>
<svg class="a" style="left:1540px;top:34px" width="190" height="46" viewBox="1540 34 190 46"><g fill="none" stroke="#8b8b8b" stroke-width="1.3"><path d="M1554 56.5H1569"/><rect x="1623.6" y="49.6" width="13.8" height="13.8" rx="2.2"/><path d="M1694.3 49.3L1708.7 63.7M1708.7 49.3L1694.3 63.7"/></g></svg>
<div class="a" style="left:242px;top:80px;width:1494px;height:33px;background:#fff"></div>
<div class="tx" style="left:258px;top:87px;font-size:17.6px;line-height:22px">File</div>
<div class="tx" style="left:308.5px;top:87px;font-size:17.6px;line-height:22px">Action</div>
<div class="tx" style="left:382px;top:87px;font-size:17.6px;line-height:22px">View</div>
<div class="tx" style="left:442px;top:87px;font-size:17.6px;line-height:22px">Help</div>
<div class="a" style="left:242px;top:113px;width:1494px;height:1px;background:#b4b4b4"></div>
<div class="a" style="left:242px;top:114px;width:1494px;height:34px;background:#fff"></div>
<div class="a" style="left:242px;top:148px;width:1494px;height:10px;background:#f0f0f0"></div>
<div class="a" style="left:242px;top:158px;width:1494px;height:763px;background:#ababab"></div>
<div class="a" style="left:248px;top:158px;width:1483px;height:758px;background:#f0f0f0"></div>
<div class="a" style="left:248px;top:158px;width:1483px;height:6px;background:#d5e3f1"></div>
<div class="a" style="left:248px;top:164px;width:468px;height:717px;background:#fff;border:1px solid #878c98;overflow:hidden" id="tree">
<svg class="a" style="left:9.0px;top:5px" width="19" height="23"><use href="#iAD"/></svg>
<div class="tx" style="left:38.0px;top:4px;line-height:27px;font-size:17.3px;letter-spacing:-.3px">Active Directory Users and Computers [SERVER01.malcolmsoto.com]</div>
<svg class="a" style="left:34.0px;top:32px" width="22" height="20"><use href="#iFolder"/></svg>
<svg class="a" style="left:12.5px;top:37.5px" width="10" height="14"><use href="#chR"/></svg>
<div class="tx" style="left:66.5px;top:31px;line-height:27px;font-size:17.3px">Saved Queries</div>
<svg class="a" style="left:35.5px;top:58.5px" width="23" height="22"><use href="#iDom"/></svg>
<svg class="a" style="left:10.0px;top:65.5px" width="14" height="10"><use href="#chD"/></svg>
<div class="tx" style="left:66.5px;top:58px;line-height:27px;font-size:17.3px">malcolmsoto.com</div>
<svg class="a" style="left:62.5px;top:86px" width="22" height="20"><use href="#iFolder"/></svg>
<svg class="a" style="left:41.0px;top:91.5px" width="10" height="14"><use href="#chR"/></svg>
<div class="tx" style="left:95.0px;top:85px;line-height:27px;font-size:17.3px">Builtin</div>
<svg class="a" style="left:62.5px;top:113px" width="22" height="20"><use href="#iFolder"/></svg>
<div class="tx" style="left:95.0px;top:112px;line-height:27px;font-size:17.3px">Computers</div>
<svg class="a" style="left:62.5px;top:140px" width="22" height="20"><use href="#iOU"/></svg>
<svg class="a" style="left:41.0px;top:145.5px" width="10" height="14"><use href="#chR"/></svg>
<div class="tx" style="left:95.0px;top:139px;line-height:27px;font-size:17.3px">Domain Controllers</div>
<svg class="a" style="left:62.5px;top:167px" width="22" height="20"><use href="#iFolder"/></svg>
<svg class="a" style="left:41.0px;top:172.5px" width="10" height="14"><use href="#chR"/></svg>
<div class="tx" style="left:95.0px;top:166px;line-height:27px;font-size:17.3px">ForeignSecurityPrincipals</div>
<svg class="a" style="left:62.5px;top:194px" width="22" height="20"><use href="#iFolder"/></svg>
<svg class="a" style="left:41.0px;top:199.5px" width="10" height="14"><use href="#chR"/></svg>
<div class="tx" style="left:95.0px;top:193px;line-height:27px;font-size:17.3px">Keys</div>
<svg class="a" style="left:62.5px;top:221px" width="22" height="20"><use href="#iFolder"/></svg>
<svg class="a" style="left:41.0px;top:226.5px" width="10" height="14"><use href="#chR"/></svg>
<div class="tx" style="left:95.0px;top:220px;line-height:27px;font-size:17.3px">LostAndFound</div>
<svg class="a" style="left:62.5px;top:248px" width="22" height="20"><use href="#iOU"/></svg>
<svg class="a" style="left:38.5px;top:254.5px" width="14" height="10"><use href="#chD"/></svg>
<div class="tx" style="left:95.0px;top:247px;line-height:27px;font-size:17.3px">Malcolm-Lab</div>
<svg class="a" style="left:91.0px;top:275px" width="22" height="20"><use href="#iOU"/></svg>
<svg class="a" style="left:67.0px;top:281.5px" width="14" height="10"><use href="#chD"/></svg>
<div class="tx" style="left:123.5px;top:274px;line-height:27px;font-size:17.3px">Houston</div>
<div class="a" style="left:117.5px;top:299px;width:126.5px;height:27px;background:#d9d9d9;border-radius:3px"></div>
<svg class="a" style="left:119.5px;top:302px" width="22" height="20"><use href="#iOU"/></svg>
<div class="tx" style="left:152.0px;top:301px;line-height:27px;font-size:17.3px">Computers</div>
<svg class="a" style="left:119.5px;top:329px" width="22" height="20"><use href="#iOU"/></svg>
<svg class="a" style="left:98.0px;top:334.5px" width="10" height="14"><use href="#chR"/></svg>
<div class="tx" style="left:152.0px;top:328px;line-height:27px;font-size:17.3px">ServiceAccounts</div>
<svg class="a" style="left:119.5px;top:356px" width="22" height="20"><use href="#iOU"/></svg>
<svg class="a" style="left:98.0px;top:361.5px" width="10" height="14"><use href="#chR"/></svg>
<div class="tx" style="left:152.0px;top:355px;line-height:27px;font-size:17.3px">Users</div>
<svg class="a" style="left:62.5px;top:383px" width="22" height="20"><use href="#iFolder"/></svg>
<svg class="a" style="left:41.0px;top:388.5px" width="10" height="14"><use href="#chR"/></svg>
<div class="tx" style="left:95.0px;top:382px;line-height:27px;font-size:17.3px">Managed Service Accounts</div>
<svg class="a" style="left:62.5px;top:410px" width="22" height="20"><use href="#iFolder"/></svg>
<svg class="a" style="left:41.0px;top:415.5px" width="10" height="14"><use href="#chR"/></svg>
<div class="tx" style="left:95.0px;top:409px;line-height:27px;font-size:17.3px">Program Data</div>
<svg class="a" style="left:62.5px;top:437px" width="22" height="20"><use href="#iOU"/></svg>
<svg class="a" style="left:41.0px;top:442.5px" width="10" height="14"><use href="#chR"/></svg>
<div class="tx" style="left:95.0px;top:436px;line-height:27px;font-size:17.3px">ServiceAccounts</div>
<svg class="a" style="left:62.5px;top:464px" width="22" height="20"><use href="#iFolder"/></svg>
<svg class="a" style="left:41.0px;top:469.5px" width="10" height="14"><use href="#chR"/></svg>
<div class="tx" style="left:95.0px;top:463px;line-height:27px;font-size:17.3px">System</div>
<svg class="a" style="left:62.5px;top:491px" width="22" height="20"><use href="#iFolder"/></svg>
<svg class="a" style="left:41.0px;top:496.5px" width="10" height="14"><use href="#chR"/></svg>
<div class="tx" style="left:95.0px;top:490px;line-height:27px;font-size:17.3px">Users</div>
<svg class="a" style="left:62.5px;top:518px" width="22" height="20"><use href="#iFolder"/></svg>
<svg class="a" style="left:41.0px;top:523.5px" width="10" height="14"><use href="#chR"/></svg>
<div class="tx" style="left:95.0px;top:517px;line-height:27px;font-size:17.3px">NTDS Quotas</div>
<svg class="a" style="left:62.5px;top:545px" width="22" height="20"><use href="#iFolder"/></svg>
<svg class="a" style="left:41.0px;top:550.5px" width="10" height="14"><use href="#chR"/></svg>
<div class="tx" style="left:95.0px;top:544px;line-height:27px;font-size:17.3px">RegisteredDevices</div>
<svg class="a" style="left:62.5px;top:572px" width="22" height="20"><use href="#iFolder"/></svg>
<svg class="a" style="left:41.0px;top:577.5px" width="10" height="14"><use href="#chR"/></svg>
<div class="tx" style="left:95.0px;top:571px;line-height:27px;font-size:17.3px">TPM Devices</div>
<div class="a" style="left:0;top:689px;width:466px;height:27px;background:#f0f0f0"></div>
<div class="a" style="left:27.5px;top:694px;width:339.5px;height:14px;background:#858585"></div>
</div>
<div class="a" style="left:721px;top:164px;width:1010px;height:717px;background:#fff;border:1px solid #8a8f98"></div>
<div class="a" style="left:972px;top:168px;width:1px;height:35px;background:#e5e5e5"></div>
<div class="a" style="left:1122px;top:168px;width:1px;height:35px;background:#e5e5e5"></div>
<div class="a" style="left:1347px;top:168px;width:1px;height:35px;background:#e5e5e5"></div>
<div class="tx" style="left:733.5px;top:175px;font-size:17.4px;line-height:22px;color:#1a1a1a">Name</div>
<div class="tx" style="left:982.5px;top:175px;font-size:17.4px;line-height:22px;color:#1a1a1a">Type</div>
<div class="tx" style="left:1132.5px;top:175px;font-size:17.4px;line-height:22px;color:#1a1a1a">Description</div>
<svg class="a" style="left:480px;top:430px" width="120" height="60" viewBox="480 430 120 60"><g fill="none" stroke="#c2452d" stroke-width="6.2" stroke-linejoin="miter"><path d="M584.500 443.500L507 470"/><path d="M526 447.300L504 471L535.500 475.800"/></g></svg>
<div class="a" style="left:315.0px;top:118px;width:1px;height:29px;background:#b9b9b9"></div>
<div class="a" style="left:396.3px;top:118px;width:1px;height:29px;background:#b9b9b9"></div>
<div class="a" style="left:443.0px;top:118px;width:1px;height:29px;background:#b9b9b9"></div>
<div class="a" style="left:524.0px;top:118px;width:1px;height:29px;background:#b9b9b9"></div>
<div class="a" style="left:360.5px;top:116px;width:34.5px;height:32px;background:#cce4f7;border:1px solid #a5d3fb;border-radius:2px"></div>
<svg class="a" style="left:249px;top:121.5px" width="25" height="22.5" viewBox="0 0 25 22.5"><path d="M11.4 1V6.4H23Q24 6.4 24 7.4V15Q24 16 23 16H11.4V21.5L1 11.25Z" fill="url(#gBack)" stroke="#0c62b8" stroke-width="1.3" stroke-linejoin="round"/><path d="M5 11L11.4 5V9H21V11Z" fill="#7fd0ff" opacity=".5"/></svg>
<svg class="a" style="left:283.5px;top:121.5px" width="25" height="22.5" viewBox="0 0 25 22.5"><path d="M13.6 1V6.4H2Q1 6.4 1 7.4V15Q1 16 2 16H13.6V21.5L24 11.25Z" fill="url(#gFwd)" stroke="#5c5c5c" stroke-width="1.3" stroke-linejoin="round"/></svg>
<svg class="a" style="left:332px;top:122px" width="21" height="23" viewBox="0 0 21 23"><path d="M.5 7.5H9L11 5H20.5V22.5H.5Z" fill="url(#gFold)" stroke="#c99c3a" stroke-width="1"/><rect x="14" y="5.8" width="4.6" height="1.6" fill="#3f8fe8"/><path d="M.5 21.6H20.5" stroke="#b98a2a" stroke-width="1.4"/><path d="M3.4 14.6Q7.4 13.4 8.2 6.4H5.6L10 .8L14 6.4H11.6Q11 14.8 3.4 16.6Z" fill="#4fc23a" stroke="#2d8f22" stroke-width=".7"/></svg>
<svg class="a" style="left:366.3px;top:125px" width="25" height="20" viewBox="0 0 25 20"><rect x=".6" y=".6" width="23.8" height="18.8" fill="#f2f4f6" stroke="#7a828c" stroke-width="1.2"/><rect x="1.2" y="1.2" width="22.6" height="3.4" fill="#9aa2ac"/><rect x="17" y="1.8" width="2" height="1.6" fill="#e8eaee"/><rect x="20.4" y="1.8" width="2" height="1.6" fill="#e8eaee"/><rect x="1.2" y="5.8" width="22.6" height="1" fill="#7a828c"/><rect x="8.2" y="6.8" width="1.2" height="12" fill="#7a828c"/><g fill="#4a90e2"><rect x="2.6" y="9" width="4" height="1.6"/><rect x="2.6" y="12" width="4" height="1.6"/><rect x="2.6" y="15" width="4" height="1.6"/></g><path d="M17.6 9.2V17L12 13.1Z" fill="#3fba32"/></svg>
<svg class="a" style="left:411px;top:120.5px" width="25" height="24.5" viewBox="0 0 25 24.5"><path d="M.6 .6H13.4L18.4 5.6V23.9H.6Z" fill="#fbf5df" stroke="#9a9a94" stroke-width="1"/><path d="M13.4 .6V5.6H18.4" fill="#e8e4d4" stroke="#9a9a94" stroke-width=".8"/><g fill="#3c3c50"><rect x="3.6" y="8.6" width="1.6" height="1.6"/><rect x="3.6" y="13" width="1.6" height="1.6"/><rect x="3.6" y="17.4" width="1.6" height="1.6"/></g><g fill="#6a74c8"><rect x="7" y="8.8" width="8" height="1.3"/><rect x="7" y="13.2" width="6" height="1.3"/><rect x="7" y="17.6" width="8" height="1.3"/></g><path d="M12 12.6H17.6V9.6L24.4 15.2L17.6 20.8V17.8H12Z" fill="#4fc83a" stroke="#2d9a22" stroke-width=".6"/></svg>
<svg class="a" style="left:459.5px;top:120.3px" width="19.5" height="24.2" viewBox="0 0 19.5 24.2"><rect x="0" y="0" width="19.5" height="24.2" fill="url(#gHelp)"/><rect x="0" y="0" width="4" height="24.2" fill="#1f2f9a"/><text x="11.600" y="20.600" text-anchor="middle" font-family="Liberation Sans,sans-serif" font-size="24" fill="#fff">?</text></svg>
<svg class="a" style="left:492.3px;top:125px" width="25" height="20" viewBox="0 0 25 20"><rect x=".6" y=".6" width="23.8" height="18.8" fill="#f2f4f6" stroke="#7a828c" stroke-width="1.2"/><rect x="1.2" y="1.2" width="22.6" height="3.4" fill="#9aa2ac"/><rect x="17" y="1.8" width="2" height="1.6" fill="#e8eaee"/><rect x="20.4" y="1.8" width="2" height="1.6" fill="#e8eaee"/><rect x="1.2" y="5.8" width="22.6" height="1" fill="#7a828c"/><rect x="15.6" y="6.8" width="1.2" height="12" fill="#7a828c"/><g fill="#4a90e2"><rect x="18.4" y="9" width="4" height="1.6"/><rect x="18.4" y="12" width="4" height="1.6"/><rect x="18.4" y="15" width="4" height="1.6"/></g><path d="M6 9.2V17L11.6 13.1Z" fill="#3fba32"/></svg>
<svg class="a" style="left:539px;top:120px" width="23" height="24" viewBox="0 0 23 24"><svg x="6" y="1.4" width="17" height="22.4"><use href="#iMan"/></svg><svg x="0" y="0" width="10.5" height="10.5"><use href="#iStar"/></svg></svg>
<svg class="a" style="left:573.5px;top:120px" width="24.5" height="24" viewBox="0 0 24.5 24"><svg x="2.6" y="5" width="12" height="16"><use href="#iManG"/></svg><svg x="11.4" y="6.6" width="13" height="17.2"><use href="#iMan"/></svg><svg x="0" y="0" width="10.5" height="10.5"><use href="#iStar"/></svg></svg>
<svg class="a" style="left:608px;top:120px" width="24.5" height="24.5" viewBox="0 0 24.5 24.5"><svg x="3.2" y="4.6" width="21" height="19.6"><use href="#iOU"/></svg><svg x="0" y="0" width="10.5" height="10.5"><use href="#iStar"/></svg></svg>
<svg class="a" style="left:642.5px;top:123px" width="23" height="21.5" viewBox="0 0 23 21.5"><path d="M.6 2.4H22.4L13.6 11.6V20.4Q11.5 21.4 9.4 20.4V11.6Z" fill="url(#gFun)" stroke="#6a8fb8" stroke-width=".9"/><rect x=".6" y=".6" width="21.8" height="2.4" rx="1" fill="#5f86b4"/></svg>
<svg class="a" style="left:677.5px;top:122px" width="22.5" height="22.5" viewBox="0 0 22.5 22.5"><rect x="4.6" y=".5" width="17.4" height="21.5" fill="url(#gGold)" stroke="#b8962c"/><rect x="5" y="18" width="16.6" height="3.6" fill="#c5a233"/><rect x="12.4" y="4" width="7" height="4" fill="#fbf6c2" stroke="#dcc877" stroke-width=".5"/><circle cx="9.4" cy="11" r="4.6" fill="#e6f2fb" fill-opacity=".85" stroke="#b9c6d2" stroke-width="1.3"/><path d="M6 14.6L1 20" stroke="#a8a8a8" stroke-width="2.2" stroke-linecap="round"/></svg>
<svg class="a" style="left:710.5px;top:120px" width="25.5" height="24" viewBox="0 0 25.5 24"><svg x="3.4" y="5" width="12" height="16"><use href="#iManG"/></svg><svg x="12.4" y="6.6" width="13" height="17.2"><use href="#iMan"/></svg><path d="M1.4 7.4Q1.4 2 7.4 2.2V.6L10.6 3.4L7.4 6.2V4.4Q3.4 4.2 3.4 7.4Z" fill="#2f86e0" stroke="#1a66c0" stroke-width=".5"/></svg>
<div class="a" style="left:841px;top:222px;width:1350px;height:767px;border:1px solid rgba(120,124,128,.45)"></div>
<div class="a" style="left:842px;top:223px;width:1348px;height:765px;border:1px solid rgba(80,130,175,.2)"></div>
<div class="a" style="left:843px;top:224px;width:1346px;height:763px;background:#f0f0f0"></div>
<div class="a" style="left:843px;top:224px;width:1346px;height:43px;background:#f3f3f3"></div>
<svg class="a" style="left:854px;top:235px" width="24" height="19" viewBox="0 0 24 19"><rect x="0" y="0" width="24" height="19" fill="#8a909c"/><rect x="1.400" y="4.800" width="21.200" height="12.800" fill="#000"/><rect x="1.200" y="1.200" width="21.600" height="2.400" fill="#d3d9e3"/><g fill="#4a6a9c"><rect x="15" y="1.600" width="1.600" height="1.600"/><rect x="17.800" y="1.600" width="1.600" height="1.600"/><rect x="20.600" y="1.600" width="1.600" height="1.600"/></g><text x="2.200" y="15.200" font-family="Liberation Sans,sans-serif" font-weight="bold" font-size="10.600" letter-spacing="-.5" fill="#fff">C:\_</text></svg>
<div class="tx" style="left:887.5px;top:234px;font-size:18px;line-height:22px;color:#000">Administrator: Command Prompt</div>
<svg class="a" style="left:1990px;top:223px" width="195" height="44" viewBox="1990 223 195 44"><g fill="none" stroke="#000" stroke-width="1.4"><path d="M2007 244.5H2022"/><rect x="2076.8" y="237.8" width="13.6" height="13.6" rx="2"/><path d="M2147.3 237.3L2161.7 251.7M2161.7 237.3L2147.3 251.7"/></g></svg>
<div class="a" style="left:843px;top:267px;width:1320px;height:720px;background:#0c0c0c"></div>
<div class="a" style="left:2163px;top:267px;width:26px;height:720px;background:#f0f0f0"></div>
<div class="a" style="left:2171px;top:293px;width:11px;height:26px;background:#858585"></div>
<pre class="a" id="con" style="left:843px;top:268.500px;margin:0;font-family:'Liberation Mono',monospace;font-size:19px;letter-spacing:-.402px;line-height:24px;color:#cccccc">Microsoft Windows [Version 10.0.26100.1742]
(c) Microsoft Corporation. All rights reserved.

C:\Windows\System32&gt;redircmp /?
Usage:

redircmp CONTAINER-DN

    where CONTAINER-DN is the distinguished name of the container
    that will become the default location for newly created computer objects

    Note: The domain functional level must be at least Windows Server 2003


C:\Windows\System32&gt;<span class="y">redircmp "OU=Computers,OU=Houston,OU=Malcolm-Lab,DC=malcolmsoto,DC=com"</span>
Redirection was successful.

C:\Windows\System32&gt;</pre>
<div class="a" style="left:1063px;top:693.5px;width:11px;height:5.5px;background:#cccccc"></div>
<div class="a" style="left:0;top:1144px;width:2520px;height:80px;background:#efefef;border-top:2px solid #c8c8c4"></div>
<div class="a" style="left:0;top:1215px;width:2520px;height:1px;background:#fff"></div>
<div class="a" style="left:2513px;top:1145px;width:1px;height:71px;background:#fff"></div>
<svg class="a" style="left:878px;top:1163px" width="35" height="35" viewBox="0 0 35 35"><defs><linearGradient id="gWin" x1="0" y1="0" x2="1" y2="1"><stop offset="0" stop-color="#4cc8f6"/><stop offset=".45" stop-color="#1b95e6"/><stop offset="1" stop-color="#0a72d8"/></linearGradient></defs><path d="M0 2Q0 0 2 0H16.6V16.6H0ZM18.4 0H33Q35 0 35 2V16.6H18.4ZM0 18.4H16.6V35H2Q0 35 0 33ZM18.4 18.4H35V33Q35 35 33 35H18.4Z" fill="url(#gWin)"/></svg>
<div class="a" style="left:934px;top:1157px;width:328px;height:46px;border-radius:23px;background:#fafafa;border:1px solid #dcdcdc;border-bottom-color:#c4c4c4;box-shadow:0 1px 2px rgba(0,0,0,.08)"></div>
<svg class="a" style="left:950px;top:1168px" width="26" height="26" viewBox="0 0 26 26"><circle cx="10.6" cy="10.4" r="8.4" fill="none" stroke="#1e1e1e" stroke-width="2.2"/><path d="M16.8 16.8L23.4 23.4" stroke="#1e1e1e" stroke-width="2.6" stroke-linecap="round"/></svg>
<div class="tx" style="left:989px;top:1168px;font-size:20px;line-height:24px;color:#4a4a4a">Search</div>
<svg class="a" style="left:1280px;top:1162px" width="38" height="36" viewBox="0 0 38 36"><defs><linearGradient id="tv1" x1="0" y1="0" x2="0" y2="1"><stop offset="0" stop-color="#fdfdfd"/><stop offset="1" stop-color="#d9d9d9"/></linearGradient><linearGradient id="tv2" x1="0" y1="0" x2="0" y2="1"><stop offset="0" stop-color="#3a3a3a"/><stop offset="1" stop-color="#161616"/></linearGradient><linearGradient id="tv3" x1="0" y1="0" x2="0" y2="1"><stop offset="0" stop-color="#c9c9c9"/><stop offset="1" stop-color="#8e8e8e"/></linearGradient></defs>
<rect x="10" y="1.2" width="27" height="24" rx="2.5" fill="url(#tv1)" stroke="#e2e2e2" stroke-width=".6"/>
<rect x=".6" y="10" width="27" height="24.6" rx="3" fill="url(#tv2)"/>
<path d="M10 10H27.6V25.2H10Z" fill="url(#tv3)"/></svg>
<svg class="a" style="left:1347px;top:1163px" width="37" height="34" viewBox="0 0 37 34"><defs><linearGradient id="fe1" x1="0" y1="0" x2="0" y2="1"><stop offset="0" stop-color="#ffd86a"/><stop offset="1" stop-color="#ffb81c"/></linearGradient><linearGradient id="fe2" x1="0" y1="0" x2="0" y2="1"><stop offset="0" stop-color="#1b9be8"/><stop offset="1" stop-color="#0a63c8"/></linearGradient></defs>
<path d="M.5 3Q.5 1 2.5 1H11L14.5 4.5H.5Z" fill="#e9a312"/><path d="M.5 4.2H14L17 2.6H34.5Q36.5 2.6 36.5 4.6V31Q36.5 33 34.5 33H2.5Q.5 33 .5 31Z" fill="url(#fe1)"/>
<path d="M6.5 33V26.5Q6.5 22.8 10 22.8H27Q30.5 22.8 30.5 26.5V33Z" fill="url(#fe2)"/><rect x="11.5" y="26.6" width="14" height="2" rx="1" fill="#0a4fa6"/></svg>
<svg class="a" style="left:1413px;top:1162px" width="36" height="36"><use href="#iEdge"/></svg>
<svg class="a" style="left:1479px;top:1164px" width="36" height="34" viewBox="0 0 36 34"><defs><linearGradient id="sm1" x1="0" y1="0" x2="0" y2="1"><stop offset="0" stop-color="#2b9be8"/><stop offset="1" stop-color="#1378d0"/></linearGradient><linearGradient id="sm2" x1="0" y1="0" x2="0" y2="1"><stop offset="0" stop-color="#8aa9c4"/><stop offset="1" stop-color="#6688a8"/></linearGradient></defs>
<rect x=".5" y="1" width="15" height="29" fill="url(#sm1)"/><rect x=".5" y="6.6" width="15" height="1.2" fill="#8cc8f4"/>
<path d="M13 17.4V15.2Q13 14 14.2 14H21.8Q23 14 23 15.2V17.4" fill="none" stroke="#6a8aa8" stroke-width="1.6"/>
<rect x="7" y="17" width="28" height="16" fill="url(#sm2)" stroke="#f4f6f8" stroke-width=".8"/><rect x="7.4" y="21.4" width="27.2" height="1.6" fill="#e9eef3"/><rect x="10.4" y="20" width="2.2" height="4.4" fill="#fff"/><rect x="29.4" y="20" width="2.2" height="4.4" fill="#fff"/></svg>
<div class="a" style="left:1492.5px;top:1204.5px;width:10px;height:4.5px;border-radius:2.5px;background:#858585"></div>
<svg class="a" style="left:1544px;top:1165px" width="38" height="25" viewBox="0 0 38 25"><defs><linearGradient id="ab1" x1="0" y1="0" x2="1" y2="1"><stop offset="0" stop-color="#f3ecb0"/><stop offset="1" stop-color="#d9cc6c"/></linearGradient></defs>
<path d="M1 10L22 1L37 5.5V13L16 24L1 17Z" fill="#b9a941"/><path d="M1 10L22 1L37 5.5L16 15.5Z" fill="url(#ab1)" stroke="#a8983a" stroke-width=".7"/>
<path d="M16 15.5L37 5.5V13L16 24Z" fill="#e6dc94"/><path d="M16 17.6L37 7.6M16 19.6L37 9.6M16 21.6L37 11.6" stroke="#b3a550" stroke-width=".8"/>
<path d="M1 10L16 15.5V24L1 17Z" fill="#a7953a"/><path d="M10 8.5L22 3.6L30 6L18 11.4Z" fill="#c9b94e"/><path d="M12 8.6L22 4.8L27 6.2L17.6 10.4Z" fill="#f5efbe"/></svg>
<div class="a" style="left:1558.5px;top:1204.5px;width:10px;height:4.5px;border-radius:2.5px;background:#858585"></div>
<div class="a" style="left:1600px;top:1151.5px;width:57px;height:57px;border-radius:6px;background:#f9f9f9;border:1px solid #e3e3e3"></div>
<svg class="a" style="left:1612px;top:1165px" width="34" height="28" viewBox="0 0 34 28"><rect x=".5" y=".5" width="33" height="27" fill="#9c9c9c" stroke="#7d7d7d"/><rect x="1.6" y="1.4" width="30.8" height="2" fill="#d2d2d2"/><rect x="1.8" y="4.2" width="30.4" height="21.6" fill="#000"/><text x="3.200" y="11.400" font-family="Liberation Sans,sans-serif" font-size="6.400" font-weight="bold" fill="#e0e0e0">C:\_</text><rect x="25" y="2" width="1.6" height="1" fill="#555"/><rect x="28" y="2" width="1.6" height="1" fill="#555"/></svg>
<div class="a" style="left:1617px;top:1204px;width:24px;height:5px;border-radius:2.5px;background:#0a74da"></div>
<svg class="a" style="left:2145px;top:1173px" width="18" height="12" viewBox="0 0 18 12"><path d="M1.6 10.2L9 2.8L16.4 10.2" fill="none" stroke="#1a1a1a" stroke-width="2" stroke-linecap="round" stroke-linejoin="round"/></svg>
<svg class="a" style="left:2188px;top:1165px" width="30" height="30" viewBox="0 0 30 30"><g fill="none" stroke="#1a1a1a" stroke-width="1.5"><path d="M3 13.6A11.2 11.2 0 0 1 23.6 7.4"/><path d="M24.4 2.6V8.2H18.8"/><path d="M26.2 15.6A11.2 11.2 0 0 1 5.6 22"/><path d="M4.6 26.8V21.2H10.2"/></g><circle cx="19.8" cy="20.8" r="6.1" fill="#f10000"/></svg>
<svg class="a" style="left:2236px;top:1169px" width="28" height="24" viewBox="0 0 28 24"><path d="M1.4 5.4L6.2 2L11 5.4V16.6L6.2 20L1.4 16.6Z" fill="#1a7fe0"/><path d="M6.2 2L11 5.4V16.6L6.2 20Z" fill="#1261c4"/><path d="M1.4 5.4L6.2 2L11 5.4L6.2 8Z" fill="#5fb4f4"/>
<path d="M15.6 5.4L20.4 2L25.2 5.4V16.6L20.4 20L15.6 16.6Z" fill="#7edcf8"/><path d="M20.4 2L25.2 5.4V16.6L20.4 20Z" fill="#4fc6ee"/><path d="M15.6 5.4L20.4 2L25.2 5.4L20.4 8Z" fill="#b8f0fc"/>
<rect x="9" y="8.4" width="9" height="2.4" fill="#3a9ee8"/><rect x="9" y="12.6" width="9" height="2.4" fill="#3a9ee8"/>
<circle cx="20.4" cy="17.4" r="5.4" fill="#a80c14"/><path d="M18.2 19.2V16.8A2.2 2.2 0 0 1 22.6 16.8V19.2Z" fill="#fff"/><rect x="17.6" y="19" width="5.6" height="1.1" fill="#fff"/></svg>
<svg class="a" style="left:2285px;top:1167px" width="27" height="27" viewBox="0 0 27 27"><g fill="none" stroke="#1a1a1a" stroke-width="1.5" stroke-linejoin="round"><path d="M17 2H3.4Q1.2 2 1.2 4.2V16.6Q1.2 18.8 3.4 18.8H17.6"/><path d="M7.4 19V23.6M16 19V23.6M5 24.2H18.4"/><rect x="19.2" y="1" width="5.4" height="8.6" rx="1.6"/><path d="M19.2 3.8H24.6M21.9 9.6V25"/></g></svg>
<svg class="a" style="left:2321px;top:1170px" width="26" height="22" viewBox="0 0 26 22"><g fill="none" stroke="#1a1a1a" stroke-width="1.5" stroke-linejoin="round" stroke-linecap="round"><path d="M1.2 7.4H5.2L10 2.6V19L5.2 14.4H1.2Z"/><path d="M13.6 7.4Q15.6 10.8 13.6 14.2"/><path d="M17 4.6Q20.8 10.8 17 17"/><path d="M20.4 1.8Q26 10.8 20.4 19.8"/></g></svg>
<div class="tx" style="right:66.5px;top:1156px;font-size:17.8px;line-height:24px;text-align:right;color:#1a1a1a">7:10 PM
9/12/2025</div>
<svg class="a" style="left:2465px;top:1167px" width="26" height="26" viewBox="0 0 26 26"><g fill="none" stroke="#1a1a1a" stroke-width="1.5" stroke-linejoin="round" stroke-linecap="round"><path d="M11 3.4Q4.8 5 4.8 12V16L2.4 19.6H19.6L17.4 16V14"/><path d="M8.4 20A2.8 2.8 0 0 0 13.8 20"/></g><g fill="none" stroke="#1a1a1a" stroke-width="1.6"><path d="M10.6 8.6H15L10.6 13.4H15.2"/><path d="M17 2.4H22L17 7.8H22.2"/></g></svg>
<div class="tx" style="right:6.5px;top:1066px;font-size:17.6px;line-height:25px;text-align:right;color:#fff">Windows Server 2025 Standard Evaluation
Windows License valid for 146 days
Build 26100.ge_release.240331-1435</div>
</div>
<div class="fr" style="left:0;top:0;width:2520px;height:6px"></div>
<div class="fr" style="left:0;top:1216px;width:2520px;height:8px"></div>
<div class="fr" style="left:0;top:0;width:6px;height:1224px"></div>
<div class="fr" style="left:2514px;top:0;width:6px;height:1224px"></div>
</body></html>
